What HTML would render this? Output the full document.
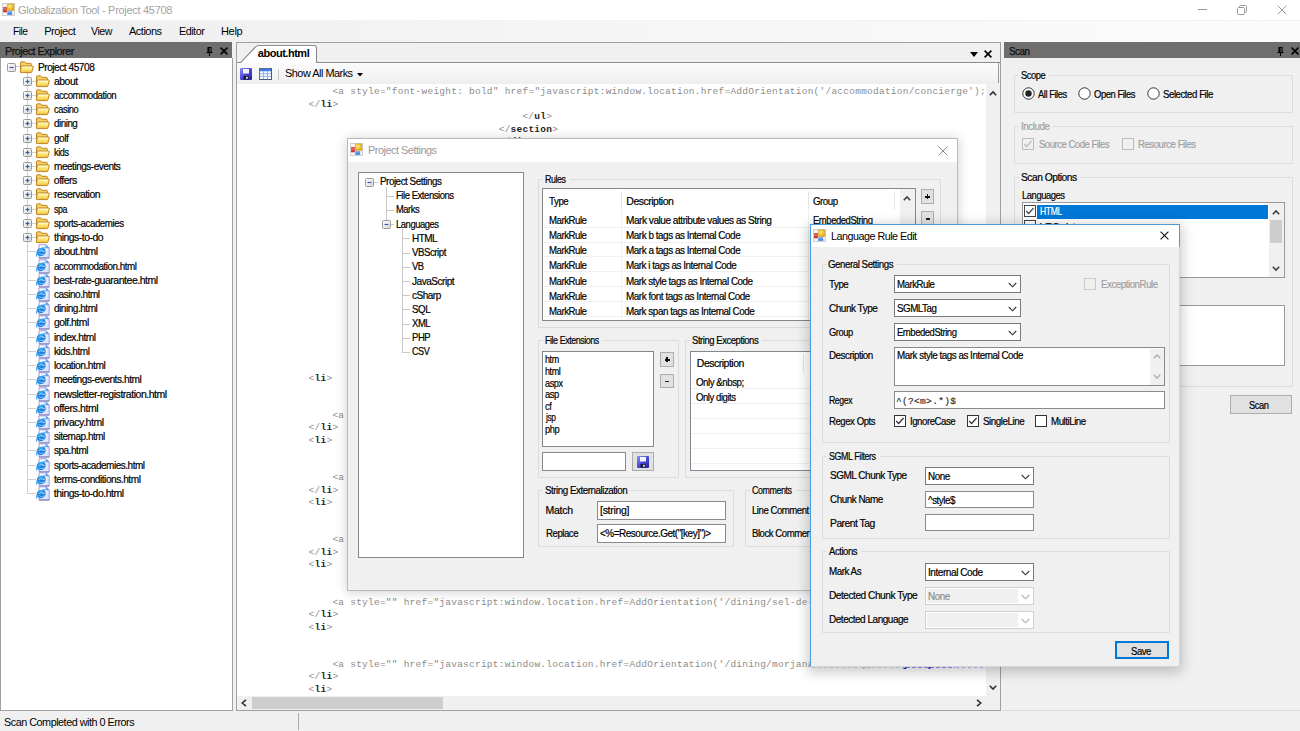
<!DOCTYPE html>
<html><head><meta charset="utf-8">
<style>
*{box-sizing:border-box;margin:0;padding:0}
html,body{width:1300px;height:731px;overflow:hidden;background:#f0f0f0;font-family:"Liberation Sans",sans-serif;font-size:11px;color:#000;position:relative}
.a{position:absolute}
.t{position:absolute;white-space:pre;line-height:20px}
.k{-webkit-text-stroke:0.2px currentColor}
.mono{position:absolute;font-family:"Liberation Mono",monospace;font-size:9.5px;line-height:20px;white-space:pre;color:#8c8c8c}
.mono b{color:#262626}
</style></head><body>
<div class="a" style="left:0px;top:0px;width:1300px;height:20px;background:#fff"></div>
<svg class="a" style="left:2px;top:3px;" width="13" height="13" viewBox="0 0 13 13"><defs><radialGradient id="ay" cx="0.4" cy="0.35" r="0.7"><stop offset="0" stop-color="#ffe98a"/><stop offset="1" stop-color="#e3a400"/></radialGradient><radialGradient id="ar" cx="0.5" cy="0.35" r="0.7"><stop offset="0" stop-color="#f27a7a"/><stop offset="1" stop-color="#b01414"/></radialGradient><linearGradient id="ab" x1="0" y1="0" x2="0" y2="1"><stop offset="0" stop-color="#8ec0ff"/><stop offset="1" stop-color="#2b6fdc"/></linearGradient></defs><rect x="0.5" y="0.5" width="12" height="12" fill="#f6f6f6" stroke="#cfcfcf"/><rect x="1.2" y="4" width="3.6" height="5.3" rx="0.5" fill="url(#ar)"/><rect x="5.2" y="0.9" width="6.6" height="6.6" rx="0.6" fill="url(#ay)" stroke="#c89410" stroke-width="0.5"/><rect x="5.2" y="7.9" width="5" height="3.8" rx="0.5" fill="url(#ab)"/></svg>
<div class="t" style="left:18.0px;top:0px;font-size:11px;letter-spacing:-0.30px;color:#a3a3a3;">Globalization Tool - Project 45708</div>
<div class="a" style="left:1198px;top:9px;width:9px;height:1px;background:#9a9a9a"></div>
<svg class="a" style="left:1237px;top:5px;" width="10" height="10" viewBox="0 0 10 10"><rect x="0.5" y="2.5" width="7" height="7" rx="1" fill="none" stroke="#9a9a9a"/><path d="M2.5 2.5 V1.5 Q2.5 0.5 3.5 0.5 H8.5 Q9.5 0.5 9.5 1.5 V6.5 Q9.5 7.5 8.5 7.5 H7.5" fill="none" stroke="#9a9a9a"/></svg>
<svg class="a" style="left:1277px;top:5px;" width="10" height="10" viewBox="0 0 10 10"><path d="M0.6 0.6 L9.4 9.4 M9.4 0.6 L0.6 9.4" stroke="#9a9a9a" stroke-width="1"/></svg>
<div class="a" style="left:0px;top:20px;width:1300px;height:22px;background:linear-gradient(to right,#eeeeee,#f6f6f6 50%,#fbfbfb)"></div>
<div class="a" style="left:0px;top:20px;width:1300px;height:1px;background:#f3f3f3"></div>
<div class="t" style="left:13.0px;top:21px;font-size:11px;letter-spacing:-0.50px;color:#000;transform:scaleX(0.927);transform-origin:0 0;">File</div>
<div class="t" style="left:44.2px;top:21px;font-size:11px;letter-spacing:-0.43px;color:#000;">Project</div>
<div class="t" style="left:91.3px;top:21px;font-size:11px;letter-spacing:-0.50px;color:#000;transform:scaleX(0.964);transform-origin:0 0;">View</div>
<div class="t" style="left:129.0px;top:21px;font-size:11px;letter-spacing:-0.50px;color:#000;">Actions</div>
<div class="t" style="left:179.0px;top:21px;font-size:11px;letter-spacing:-0.50px;color:#000;transform:scaleX(0.981);transform-origin:0 0;">Editor</div>
<div class="t" style="left:221.0px;top:21px;font-size:11px;letter-spacing:-0.33px;color:#000;">Help</div>
<div class="a" style="left:0px;top:42px;width:232px;height:16px;background:#6e6e6e"></div>
<div class="t" style="left:5.2px;top:41px;font-size:11px;letter-spacing:-0.50px;color:#101010;-webkit-text-stroke:0.25px #101010;transform:scaleX(0.979);transform-origin:0 0;">Project Explorer</div>
<svg class="a" style="left:206px;top:47px;" width="7" height="9" viewBox="0 0 7 9"><path d="M1.5 0.5 H5.5 M2 0.5 V5 M5 0.5 V5 M0.5 5.5 H6.5 M3.5 5.5 V9" stroke="#000" stroke-width="1.1" fill="none"/><rect x="2" y="1" width="1.5" height="4" fill="#000"/></svg>
<svg class="a" style="left:220px;top:47px;" width="8" height="8" viewBox="0 0 8 8"><path d="M0.6 0.6 L7.4 7.4 M7.4 0.6 L0.6 7.4" stroke="#000" stroke-width="1.6"/></svg>
<div class="a" style="left:0px;top:58px;width:233px;height:653px;background:#fff;border:1px solid #a0a0a0;border-top:0"></div>
<div class="a" style="left:27px;top:72px;width:1px;height:422px;background:#cfcfcf"></div>
<div class="a" style="left:16px;top:66px;width:4px;height:1px;background:#cfcfcf"></div>
<svg class="a" style="left:7px;top:63px;" width="9" height="9" viewBox="0 0 9 9"><defs><linearGradient id="eg" x1="0" y1="0" x2="1" y2="1"><stop offset="0" stop-color="#ffffff"/><stop offset="1" stop-color="#d8d8d8"/></linearGradient></defs><rect x="0.5" y="0.5" width="8" height="8" rx="1" fill="url(#eg)" stroke="#9a9a9a"/><path d="M2.5 4.5 H6.5" stroke="#3b5bb5" stroke-width="1.2"/></svg>
<svg class="a" style="left:19px;top:61px;" width="15" height="13" viewBox="0 0 15 13"><defs><linearGradient id="fd" x1="0" y1="0" x2="0" y2="1"><stop offset="0" stop-color="#fff7b8"/><stop offset="0.6" stop-color="#fbe068"/><stop offset="1" stop-color="#eeb83a"/></linearGradient></defs><path d="M1.5 10.5 V2 Q1.5 0.8 2.7 0.8 H5.3 Q5.9 0.8 6.3 1.4 L6.9 2.3 H11.4 Q12.4 2.3 12.4 3.3 V5.2" fill="#f5cf66" stroke="#bd8420" stroke-width="1"/><path d="M3 5 H13.6 Q14.5 5 14.3 5.8 L12.9 10.8 Q12.7 11.6 11.9 11.6 H2.1 Q1.2 11.6 1.3 10.8 L2.2 5.7 Q2.3 5 3 5Z" fill="url(#fd)" stroke="#bd8420" stroke-width="1"/><path d="M3.2 6.2 H13" stroke="#fffbe0" stroke-width="0.8"/></svg>
<div class="t k" style="left:37.6px;top:57px;font-size:10.5px;letter-spacing:-0.50px;transform:scaleX(0.966);transform-origin:0 0;">Project 45708</div>
<div class="a" style="left:32px;top:81px;width:4px;height:1px;background:#cfcfcf"></div>
<svg class="a" style="left:23px;top:77px;" width="9" height="9" viewBox="0 0 9 9"><defs><linearGradient id="eg" x1="0" y1="0" x2="1" y2="1"><stop offset="0" stop-color="#ffffff"/><stop offset="1" stop-color="#d8d8d8"/></linearGradient></defs><rect x="0.5" y="0.5" width="8" height="8" rx="1" fill="url(#eg)" stroke="#9a9a9a"/><path d="M2.5 4.5 H6.5" stroke="#3b5bb5" stroke-width="1.2"/><path d="M4.5 2.5 V6.5" stroke="#3b5bb5" stroke-width="1.2"/></svg>
<svg class="a" style="left:35px;top:75px;" width="15" height="13" viewBox="0 0 15 13"><defs><linearGradient id="fd" x1="0" y1="0" x2="0" y2="1"><stop offset="0" stop-color="#fff7b8"/><stop offset="0.6" stop-color="#fbe068"/><stop offset="1" stop-color="#eeb83a"/></linearGradient></defs><path d="M1.5 10.5 V2 Q1.5 0.8 2.7 0.8 H5.3 Q5.9 0.8 6.3 1.4 L6.9 2.3 H11.4 Q12.4 2.3 12.4 3.3 V5.2" fill="#f5cf66" stroke="#bd8420" stroke-width="1"/><path d="M3 5 H13.6 Q14.5 5 14.3 5.8 L12.9 10.8 Q12.7 11.6 11.9 11.6 H2.1 Q1.2 11.6 1.3 10.8 L2.2 5.7 Q2.3 5 3 5Z" fill="url(#fd)" stroke="#bd8420" stroke-width="1"/><path d="M3.2 6.2 H13" stroke="#fffbe0" stroke-width="0.8"/></svg>
<div class="t k" style="left:53.8px;top:71px;font-size:10.5px;letter-spacing:-0.50px;transform:scaleX(0.992);transform-origin:0 0;">about</div>
<div class="a" style="left:32px;top:95px;width:4px;height:1px;background:#cfcfcf"></div>
<svg class="a" style="left:23px;top:91px;" width="9" height="9" viewBox="0 0 9 9"><defs><linearGradient id="eg" x1="0" y1="0" x2="1" y2="1"><stop offset="0" stop-color="#ffffff"/><stop offset="1" stop-color="#d8d8d8"/></linearGradient></defs><rect x="0.5" y="0.5" width="8" height="8" rx="1" fill="url(#eg)" stroke="#9a9a9a"/><path d="M2.5 4.5 H6.5" stroke="#3b5bb5" stroke-width="1.2"/><path d="M4.5 2.5 V6.5" stroke="#3b5bb5" stroke-width="1.2"/></svg>
<svg class="a" style="left:35px;top:89px;" width="15" height="13" viewBox="0 0 15 13"><defs><linearGradient id="fd" x1="0" y1="0" x2="0" y2="1"><stop offset="0" stop-color="#fff7b8"/><stop offset="0.6" stop-color="#fbe068"/><stop offset="1" stop-color="#eeb83a"/></linearGradient></defs><path d="M1.5 10.5 V2 Q1.5 0.8 2.7 0.8 H5.3 Q5.9 0.8 6.3 1.4 L6.9 2.3 H11.4 Q12.4 2.3 12.4 3.3 V5.2" fill="#f5cf66" stroke="#bd8420" stroke-width="1"/><path d="M3 5 H13.6 Q14.5 5 14.3 5.8 L12.9 10.8 Q12.7 11.6 11.9 11.6 H2.1 Q1.2 11.6 1.3 10.8 L2.2 5.7 Q2.3 5 3 5Z" fill="url(#fd)" stroke="#bd8420" stroke-width="1"/><path d="M3.2 6.2 H13" stroke="#fffbe0" stroke-width="0.8"/></svg>
<div class="t k" style="left:53.8px;top:85px;font-size:10.5px;letter-spacing:-0.50px;transform:scaleX(0.921);transform-origin:0 0;">accommodation</div>
<div class="a" style="left:32px;top:109px;width:4px;height:1px;background:#cfcfcf"></div>
<svg class="a" style="left:23px;top:105px;" width="9" height="9" viewBox="0 0 9 9"><defs><linearGradient id="eg" x1="0" y1="0" x2="1" y2="1"><stop offset="0" stop-color="#ffffff"/><stop offset="1" stop-color="#d8d8d8"/></linearGradient></defs><rect x="0.5" y="0.5" width="8" height="8" rx="1" fill="url(#eg)" stroke="#9a9a9a"/><path d="M2.5 4.5 H6.5" stroke="#3b5bb5" stroke-width="1.2"/><path d="M4.5 2.5 V6.5" stroke="#3b5bb5" stroke-width="1.2"/></svg>
<svg class="a" style="left:35px;top:103px;" width="15" height="13" viewBox="0 0 15 13"><defs><linearGradient id="fd" x1="0" y1="0" x2="0" y2="1"><stop offset="0" stop-color="#fff7b8"/><stop offset="0.6" stop-color="#fbe068"/><stop offset="1" stop-color="#eeb83a"/></linearGradient></defs><path d="M1.5 10.5 V2 Q1.5 0.8 2.7 0.8 H5.3 Q5.9 0.8 6.3 1.4 L6.9 2.3 H11.4 Q12.4 2.3 12.4 3.3 V5.2" fill="#f5cf66" stroke="#bd8420" stroke-width="1"/><path d="M3 5 H13.6 Q14.5 5 14.3 5.8 L12.9 10.8 Q12.7 11.6 11.9 11.6 H2.1 Q1.2 11.6 1.3 10.8 L2.2 5.7 Q2.3 5 3 5Z" fill="url(#fd)" stroke="#bd8420" stroke-width="1"/><path d="M3.2 6.2 H13" stroke="#fffbe0" stroke-width="0.8"/></svg>
<div class="t k" style="left:53.8px;top:99px;font-size:10.5px;letter-spacing:-0.50px;transform:scaleX(0.888);transform-origin:0 0;">casino</div>
<div class="a" style="left:32px;top:123px;width:4px;height:1px;background:#cfcfcf"></div>
<svg class="a" style="left:23px;top:119px;" width="9" height="9" viewBox="0 0 9 9"><defs><linearGradient id="eg" x1="0" y1="0" x2="1" y2="1"><stop offset="0" stop-color="#ffffff"/><stop offset="1" stop-color="#d8d8d8"/></linearGradient></defs><rect x="0.5" y="0.5" width="8" height="8" rx="1" fill="url(#eg)" stroke="#9a9a9a"/><path d="M2.5 4.5 H6.5" stroke="#3b5bb5" stroke-width="1.2"/><path d="M4.5 2.5 V6.5" stroke="#3b5bb5" stroke-width="1.2"/></svg>
<svg class="a" style="left:35px;top:117px;" width="15" height="13" viewBox="0 0 15 13"><defs><linearGradient id="fd" x1="0" y1="0" x2="0" y2="1"><stop offset="0" stop-color="#fff7b8"/><stop offset="0.6" stop-color="#fbe068"/><stop offset="1" stop-color="#eeb83a"/></linearGradient></defs><path d="M1.5 10.5 V2 Q1.5 0.8 2.7 0.8 H5.3 Q5.9 0.8 6.3 1.4 L6.9 2.3 H11.4 Q12.4 2.3 12.4 3.3 V5.2" fill="#f5cf66" stroke="#bd8420" stroke-width="1"/><path d="M3 5 H13.6 Q14.5 5 14.3 5.8 L12.9 10.8 Q12.7 11.6 11.9 11.6 H2.1 Q1.2 11.6 1.3 10.8 L2.2 5.7 Q2.3 5 3 5Z" fill="url(#fd)" stroke="#bd8420" stroke-width="1"/><path d="M3.2 6.2 H13" stroke="#fffbe0" stroke-width="0.8"/></svg>
<div class="t k" style="left:53.8px;top:113px;font-size:10.5px;letter-spacing:-0.50px;transform:scaleX(0.933);transform-origin:0 0;">dining</div>
<div class="a" style="left:32px;top:138px;width:4px;height:1px;background:#cfcfcf"></div>
<svg class="a" style="left:23px;top:134px;" width="9" height="9" viewBox="0 0 9 9"><defs><linearGradient id="eg" x1="0" y1="0" x2="1" y2="1"><stop offset="0" stop-color="#ffffff"/><stop offset="1" stop-color="#d8d8d8"/></linearGradient></defs><rect x="0.5" y="0.5" width="8" height="8" rx="1" fill="url(#eg)" stroke="#9a9a9a"/><path d="M2.5 4.5 H6.5" stroke="#3b5bb5" stroke-width="1.2"/><path d="M4.5 2.5 V6.5" stroke="#3b5bb5" stroke-width="1.2"/></svg>
<svg class="a" style="left:35px;top:132px;" width="15" height="13" viewBox="0 0 15 13"><defs><linearGradient id="fd" x1="0" y1="0" x2="0" y2="1"><stop offset="0" stop-color="#fff7b8"/><stop offset="0.6" stop-color="#fbe068"/><stop offset="1" stop-color="#eeb83a"/></linearGradient></defs><path d="M1.5 10.5 V2 Q1.5 0.8 2.7 0.8 H5.3 Q5.9 0.8 6.3 1.4 L6.9 2.3 H11.4 Q12.4 2.3 12.4 3.3 V5.2" fill="#f5cf66" stroke="#bd8420" stroke-width="1"/><path d="M3 5 H13.6 Q14.5 5 14.3 5.8 L12.9 10.8 Q12.7 11.6 11.9 11.6 H2.1 Q1.2 11.6 1.3 10.8 L2.2 5.7 Q2.3 5 3 5Z" fill="url(#fd)" stroke="#bd8420" stroke-width="1"/><path d="M3.2 6.2 H13" stroke="#fffbe0" stroke-width="0.8"/></svg>
<div class="t k" style="left:53.8px;top:128px;font-size:10.5px;letter-spacing:-0.50px;transform:scaleX(0.958);transform-origin:0 0;">golf</div>
<div class="a" style="left:32px;top:152px;width:4px;height:1px;background:#cfcfcf"></div>
<svg class="a" style="left:23px;top:148px;" width="9" height="9" viewBox="0 0 9 9"><defs><linearGradient id="eg" x1="0" y1="0" x2="1" y2="1"><stop offset="0" stop-color="#ffffff"/><stop offset="1" stop-color="#d8d8d8"/></linearGradient></defs><rect x="0.5" y="0.5" width="8" height="8" rx="1" fill="url(#eg)" stroke="#9a9a9a"/><path d="M2.5 4.5 H6.5" stroke="#3b5bb5" stroke-width="1.2"/><path d="M4.5 2.5 V6.5" stroke="#3b5bb5" stroke-width="1.2"/></svg>
<svg class="a" style="left:35px;top:146px;" width="15" height="13" viewBox="0 0 15 13"><defs><linearGradient id="fd" x1="0" y1="0" x2="0" y2="1"><stop offset="0" stop-color="#fff7b8"/><stop offset="0.6" stop-color="#fbe068"/><stop offset="1" stop-color="#eeb83a"/></linearGradient></defs><path d="M1.5 10.5 V2 Q1.5 0.8 2.7 0.8 H5.3 Q5.9 0.8 6.3 1.4 L6.9 2.3 H11.4 Q12.4 2.3 12.4 3.3 V5.2" fill="#f5cf66" stroke="#bd8420" stroke-width="1"/><path d="M3 5 H13.6 Q14.5 5 14.3 5.8 L12.9 10.8 Q12.7 11.6 11.9 11.6 H2.1 Q1.2 11.6 1.3 10.8 L2.2 5.7 Q2.3 5 3 5Z" fill="url(#fd)" stroke="#bd8420" stroke-width="1"/><path d="M3.2 6.2 H13" stroke="#fffbe0" stroke-width="0.8"/></svg>
<div class="t k" style="left:53.8px;top:142px;font-size:10.5px;letter-spacing:-0.50px;transform:scaleX(0.874);transform-origin:0 0;">kids</div>
<div class="a" style="left:32px;top:166px;width:4px;height:1px;background:#cfcfcf"></div>
<svg class="a" style="left:23px;top:162px;" width="9" height="9" viewBox="0 0 9 9"><defs><linearGradient id="eg" x1="0" y1="0" x2="1" y2="1"><stop offset="0" stop-color="#ffffff"/><stop offset="1" stop-color="#d8d8d8"/></linearGradient></defs><rect x="0.5" y="0.5" width="8" height="8" rx="1" fill="url(#eg)" stroke="#9a9a9a"/><path d="M2.5 4.5 H6.5" stroke="#3b5bb5" stroke-width="1.2"/><path d="M4.5 2.5 V6.5" stroke="#3b5bb5" stroke-width="1.2"/></svg>
<svg class="a" style="left:35px;top:160px;" width="15" height="13" viewBox="0 0 15 13"><defs><linearGradient id="fd" x1="0" y1="0" x2="0" y2="1"><stop offset="0" stop-color="#fff7b8"/><stop offset="0.6" stop-color="#fbe068"/><stop offset="1" stop-color="#eeb83a"/></linearGradient></defs><path d="M1.5 10.5 V2 Q1.5 0.8 2.7 0.8 H5.3 Q5.9 0.8 6.3 1.4 L6.9 2.3 H11.4 Q12.4 2.3 12.4 3.3 V5.2" fill="#f5cf66" stroke="#bd8420" stroke-width="1"/><path d="M3 5 H13.6 Q14.5 5 14.3 5.8 L12.9 10.8 Q12.7 11.6 11.9 11.6 H2.1 Q1.2 11.6 1.3 10.8 L2.2 5.7 Q2.3 5 3 5Z" fill="url(#fd)" stroke="#bd8420" stroke-width="1"/><path d="M3.2 6.2 H13" stroke="#fffbe0" stroke-width="0.8"/></svg>
<div class="t k" style="left:53.8px;top:156px;font-size:10.5px;letter-spacing:-0.50px;transform:scaleX(0.955);transform-origin:0 0;">meetings-events</div>
<div class="a" style="left:32px;top:180px;width:4px;height:1px;background:#cfcfcf"></div>
<svg class="a" style="left:23px;top:176px;" width="9" height="9" viewBox="0 0 9 9"><defs><linearGradient id="eg" x1="0" y1="0" x2="1" y2="1"><stop offset="0" stop-color="#ffffff"/><stop offset="1" stop-color="#d8d8d8"/></linearGradient></defs><rect x="0.5" y="0.5" width="8" height="8" rx="1" fill="url(#eg)" stroke="#9a9a9a"/><path d="M2.5 4.5 H6.5" stroke="#3b5bb5" stroke-width="1.2"/><path d="M4.5 2.5 V6.5" stroke="#3b5bb5" stroke-width="1.2"/></svg>
<svg class="a" style="left:35px;top:174px;" width="15" height="13" viewBox="0 0 15 13"><defs><linearGradient id="fd" x1="0" y1="0" x2="0" y2="1"><stop offset="0" stop-color="#fff7b8"/><stop offset="0.6" stop-color="#fbe068"/><stop offset="1" stop-color="#eeb83a"/></linearGradient></defs><path d="M1.5 10.5 V2 Q1.5 0.8 2.7 0.8 H5.3 Q5.9 0.8 6.3 1.4 L6.9 2.3 H11.4 Q12.4 2.3 12.4 3.3 V5.2" fill="#f5cf66" stroke="#bd8420" stroke-width="1"/><path d="M3 5 H13.6 Q14.5 5 14.3 5.8 L12.9 10.8 Q12.7 11.6 11.9 11.6 H2.1 Q1.2 11.6 1.3 10.8 L2.2 5.7 Q2.3 5 3 5Z" fill="url(#fd)" stroke="#bd8420" stroke-width="1"/><path d="M3.2 6.2 H13" stroke="#fffbe0" stroke-width="0.8"/></svg>
<div class="t k" style="left:53.8px;top:170px;font-size:10.5px;letter-spacing:-0.50px;">offers</div>
<div class="a" style="left:32px;top:194px;width:4px;height:1px;background:#cfcfcf"></div>
<svg class="a" style="left:23px;top:190px;" width="9" height="9" viewBox="0 0 9 9"><defs><linearGradient id="eg" x1="0" y1="0" x2="1" y2="1"><stop offset="0" stop-color="#ffffff"/><stop offset="1" stop-color="#d8d8d8"/></linearGradient></defs><rect x="0.5" y="0.5" width="8" height="8" rx="1" fill="url(#eg)" stroke="#9a9a9a"/><path d="M2.5 4.5 H6.5" stroke="#3b5bb5" stroke-width="1.2"/><path d="M4.5 2.5 V6.5" stroke="#3b5bb5" stroke-width="1.2"/></svg>
<svg class="a" style="left:35px;top:188px;" width="15" height="13" viewBox="0 0 15 13"><defs><linearGradient id="fd" x1="0" y1="0" x2="0" y2="1"><stop offset="0" stop-color="#fff7b8"/><stop offset="0.6" stop-color="#fbe068"/><stop offset="1" stop-color="#eeb83a"/></linearGradient></defs><path d="M1.5 10.5 V2 Q1.5 0.8 2.7 0.8 H5.3 Q5.9 0.8 6.3 1.4 L6.9 2.3 H11.4 Q12.4 2.3 12.4 3.3 V5.2" fill="#f5cf66" stroke="#bd8420" stroke-width="1"/><path d="M3 5 H13.6 Q14.5 5 14.3 5.8 L12.9 10.8 Q12.7 11.6 11.9 11.6 H2.1 Q1.2 11.6 1.3 10.8 L2.2 5.7 Q2.3 5 3 5Z" fill="url(#fd)" stroke="#bd8420" stroke-width="1"/><path d="M3.2 6.2 H13" stroke="#fffbe0" stroke-width="0.8"/></svg>
<div class="t k" style="left:53.8px;top:184px;font-size:10.5px;letter-spacing:-0.50px;transform:scaleX(0.991);transform-origin:0 0;">reservation</div>
<div class="a" style="left:32px;top:209px;width:4px;height:1px;background:#cfcfcf"></div>
<svg class="a" style="left:23px;top:205px;" width="9" height="9" viewBox="0 0 9 9"><defs><linearGradient id="eg" x1="0" y1="0" x2="1" y2="1"><stop offset="0" stop-color="#ffffff"/><stop offset="1" stop-color="#d8d8d8"/></linearGradient></defs><rect x="0.5" y="0.5" width="8" height="8" rx="1" fill="url(#eg)" stroke="#9a9a9a"/><path d="M2.5 4.5 H6.5" stroke="#3b5bb5" stroke-width="1.2"/><path d="M4.5 2.5 V6.5" stroke="#3b5bb5" stroke-width="1.2"/></svg>
<svg class="a" style="left:35px;top:203px;" width="15" height="13" viewBox="0 0 15 13"><defs><linearGradient id="fd" x1="0" y1="0" x2="0" y2="1"><stop offset="0" stop-color="#fff7b8"/><stop offset="0.6" stop-color="#fbe068"/><stop offset="1" stop-color="#eeb83a"/></linearGradient></defs><path d="M1.5 10.5 V2 Q1.5 0.8 2.7 0.8 H5.3 Q5.9 0.8 6.3 1.4 L6.9 2.3 H11.4 Q12.4 2.3 12.4 3.3 V5.2" fill="#f5cf66" stroke="#bd8420" stroke-width="1"/><path d="M3 5 H13.6 Q14.5 5 14.3 5.8 L12.9 10.8 Q12.7 11.6 11.9 11.6 H2.1 Q1.2 11.6 1.3 10.8 L2.2 5.7 Q2.3 5 3 5Z" fill="url(#fd)" stroke="#bd8420" stroke-width="1"/><path d="M3.2 6.2 H13" stroke="#fffbe0" stroke-width="0.8"/></svg>
<div class="t k" style="left:53.8px;top:199px;font-size:10.5px;letter-spacing:-0.50px;transform:scaleX(0.841);transform-origin:0 0;">spa</div>
<div class="a" style="left:32px;top:223px;width:4px;height:1px;background:#cfcfcf"></div>
<svg class="a" style="left:23px;top:219px;" width="9" height="9" viewBox="0 0 9 9"><defs><linearGradient id="eg" x1="0" y1="0" x2="1" y2="1"><stop offset="0" stop-color="#ffffff"/><stop offset="1" stop-color="#d8d8d8"/></linearGradient></defs><rect x="0.5" y="0.5" width="8" height="8" rx="1" fill="url(#eg)" stroke="#9a9a9a"/><path d="M2.5 4.5 H6.5" stroke="#3b5bb5" stroke-width="1.2"/><path d="M4.5 2.5 V6.5" stroke="#3b5bb5" stroke-width="1.2"/></svg>
<svg class="a" style="left:35px;top:217px;" width="15" height="13" viewBox="0 0 15 13"><defs><linearGradient id="fd" x1="0" y1="0" x2="0" y2="1"><stop offset="0" stop-color="#fff7b8"/><stop offset="0.6" stop-color="#fbe068"/><stop offset="1" stop-color="#eeb83a"/></linearGradient></defs><path d="M1.5 10.5 V2 Q1.5 0.8 2.7 0.8 H5.3 Q5.9 0.8 6.3 1.4 L6.9 2.3 H11.4 Q12.4 2.3 12.4 3.3 V5.2" fill="#f5cf66" stroke="#bd8420" stroke-width="1"/><path d="M3 5 H13.6 Q14.5 5 14.3 5.8 L12.9 10.8 Q12.7 11.6 11.9 11.6 H2.1 Q1.2 11.6 1.3 10.8 L2.2 5.7 Q2.3 5 3 5Z" fill="url(#fd)" stroke="#bd8420" stroke-width="1"/><path d="M3.2 6.2 H13" stroke="#fffbe0" stroke-width="0.8"/></svg>
<div class="t k" style="left:53.8px;top:213px;font-size:10.5px;letter-spacing:-0.50px;transform:scaleX(0.929);transform-origin:0 0;">sports-academies</div>
<div class="a" style="left:32px;top:237px;width:4px;height:1px;background:#cfcfcf"></div>
<svg class="a" style="left:23px;top:233px;" width="9" height="9" viewBox="0 0 9 9"><defs><linearGradient id="eg" x1="0" y1="0" x2="1" y2="1"><stop offset="0" stop-color="#ffffff"/><stop offset="1" stop-color="#d8d8d8"/></linearGradient></defs><rect x="0.5" y="0.5" width="8" height="8" rx="1" fill="url(#eg)" stroke="#9a9a9a"/><path d="M2.5 4.5 H6.5" stroke="#3b5bb5" stroke-width="1.2"/><path d="M4.5 2.5 V6.5" stroke="#3b5bb5" stroke-width="1.2"/></svg>
<svg class="a" style="left:35px;top:231px;" width="15" height="13" viewBox="0 0 15 13"><defs><linearGradient id="fd" x1="0" y1="0" x2="0" y2="1"><stop offset="0" stop-color="#fff7b8"/><stop offset="0.6" stop-color="#fbe068"/><stop offset="1" stop-color="#eeb83a"/></linearGradient></defs><path d="M1.5 10.5 V2 Q1.5 0.8 2.7 0.8 H5.3 Q5.9 0.8 6.3 1.4 L6.9 2.3 H11.4 Q12.4 2.3 12.4 3.3 V5.2" fill="#f5cf66" stroke="#bd8420" stroke-width="1"/><path d="M3 5 H13.6 Q14.5 5 14.3 5.8 L12.9 10.8 Q12.7 11.6 11.9 11.6 H2.1 Q1.2 11.6 1.3 10.8 L2.2 5.7 Q2.3 5 3 5Z" fill="url(#fd)" stroke="#bd8420" stroke-width="1"/><path d="M3.2 6.2 H13" stroke="#fffbe0" stroke-width="0.8"/></svg>
<div class="t k" style="left:53.8px;top:227px;font-size:10.5px;letter-spacing:-0.50px;transform:scaleX(0.990);transform-origin:0 0;">things-to-do</div>
<div class="a" style="left:28px;top:251px;width:8px;height:1px;background:#cfcfcf"></div>
<svg class="a" style="left:35px;top:244px;" width="15" height="15" viewBox="0 0 15 15"><defs><linearGradient id="pg" x1="0" y1="0" x2="1" y2="1"><stop offset="0" stop-color="#ffffff"/><stop offset="1" stop-color="#d4dcfa"/></linearGradient></defs><path d="M4 0.8 H11 L14.2 4 V14 H4Z" fill="url(#pg)" stroke="#9d9dd8" stroke-width="1"/><path d="M4 14 H14.2" stroke="#7c7cb4" stroke-width="1"/><path d="M11 0.8 V4 H14.2Z" fill="#5aa0e8" stroke="#8a9ad8" stroke-width="0.6"/><ellipse cx="6.2" cy="7.9" rx="4.6" ry="4.1" transform="rotate(-28 6.2 7.9)" fill="#1f7edc"/><path d="M3.2 7.4 Q6 6 9.8 7.6" stroke="#bfe8ff" stroke-width="1.1" fill="none"/><path d="M3.8 9.6 Q6.5 11.6 9.6 9.8" stroke="#7cc8f8" stroke-width="1" fill="none"/><ellipse cx="5.6" cy="5.4" rx="2" ry="1.1" fill="#5ec0f8" opacity="0.9"/><path d="M1.6 12.4 Q1.4 5 10.4 3.6" stroke="#2ea4ec" stroke-width="1.2" fill="none"/></svg>
<div class="t k" style="left:53.8px;top:241px;font-size:10.5px;letter-spacing:-0.50px;transform:scaleX(0.989);transform-origin:0 0;">about.html</div>
<div class="a" style="left:28px;top:266px;width:8px;height:1px;background:#cfcfcf"></div>
<svg class="a" style="left:35px;top:259px;" width="15" height="15" viewBox="0 0 15 15"><defs><linearGradient id="pg" x1="0" y1="0" x2="1" y2="1"><stop offset="0" stop-color="#ffffff"/><stop offset="1" stop-color="#d4dcfa"/></linearGradient></defs><path d="M4 0.8 H11 L14.2 4 V14 H4Z" fill="url(#pg)" stroke="#9d9dd8" stroke-width="1"/><path d="M4 14 H14.2" stroke="#7c7cb4" stroke-width="1"/><path d="M11 0.8 V4 H14.2Z" fill="#5aa0e8" stroke="#8a9ad8" stroke-width="0.6"/><ellipse cx="6.2" cy="7.9" rx="4.6" ry="4.1" transform="rotate(-28 6.2 7.9)" fill="#1f7edc"/><path d="M3.2 7.4 Q6 6 9.8 7.6" stroke="#bfe8ff" stroke-width="1.1" fill="none"/><path d="M3.8 9.6 Q6.5 11.6 9.6 9.8" stroke="#7cc8f8" stroke-width="1" fill="none"/><ellipse cx="5.6" cy="5.4" rx="2" ry="1.1" fill="#5ec0f8" opacity="0.9"/><path d="M1.6 12.4 Q1.4 5 10.4 3.6" stroke="#2ea4ec" stroke-width="1.2" fill="none"/></svg>
<div class="t k" style="left:53.8px;top:256px;font-size:10.5px;letter-spacing:-0.50px;transform:scaleX(0.938);transform-origin:0 0;">accommodation.html</div>
<div class="a" style="left:28px;top:280px;width:8px;height:1px;background:#cfcfcf"></div>
<svg class="a" style="left:35px;top:273px;" width="15" height="15" viewBox="0 0 15 15"><defs><linearGradient id="pg" x1="0" y1="0" x2="1" y2="1"><stop offset="0" stop-color="#ffffff"/><stop offset="1" stop-color="#d4dcfa"/></linearGradient></defs><path d="M4 0.8 H11 L14.2 4 V14 H4Z" fill="url(#pg)" stroke="#9d9dd8" stroke-width="1"/><path d="M4 14 H14.2" stroke="#7c7cb4" stroke-width="1"/><path d="M11 0.8 V4 H14.2Z" fill="#5aa0e8" stroke="#8a9ad8" stroke-width="0.6"/><ellipse cx="6.2" cy="7.9" rx="4.6" ry="4.1" transform="rotate(-28 6.2 7.9)" fill="#1f7edc"/><path d="M3.2 7.4 Q6 6 9.8 7.6" stroke="#bfe8ff" stroke-width="1.1" fill="none"/><path d="M3.8 9.6 Q6.5 11.6 9.6 9.8" stroke="#7cc8f8" stroke-width="1" fill="none"/><ellipse cx="5.6" cy="5.4" rx="2" ry="1.1" fill="#5ec0f8" opacity="0.9"/><path d="M1.6 12.4 Q1.4 5 10.4 3.6" stroke="#2ea4ec" stroke-width="1.2" fill="none"/></svg>
<div class="t k" style="left:53.8px;top:270px;font-size:10.5px;letter-spacing:-0.46px;">best-rate-guarantee.html</div>
<div class="a" style="left:28px;top:294px;width:8px;height:1px;background:#cfcfcf"></div>
<svg class="a" style="left:35px;top:287px;" width="15" height="15" viewBox="0 0 15 15"><defs><linearGradient id="pg" x1="0" y1="0" x2="1" y2="1"><stop offset="0" stop-color="#ffffff"/><stop offset="1" stop-color="#d4dcfa"/></linearGradient></defs><path d="M4 0.8 H11 L14.2 4 V14 H4Z" fill="url(#pg)" stroke="#9d9dd8" stroke-width="1"/><path d="M4 14 H14.2" stroke="#7c7cb4" stroke-width="1"/><path d="M11 0.8 V4 H14.2Z" fill="#5aa0e8" stroke="#8a9ad8" stroke-width="0.6"/><ellipse cx="6.2" cy="7.9" rx="4.6" ry="4.1" transform="rotate(-28 6.2 7.9)" fill="#1f7edc"/><path d="M3.2 7.4 Q6 6 9.8 7.6" stroke="#bfe8ff" stroke-width="1.1" fill="none"/><path d="M3.8 9.6 Q6.5 11.6 9.6 9.8" stroke="#7cc8f8" stroke-width="1" fill="none"/><ellipse cx="5.6" cy="5.4" rx="2" ry="1.1" fill="#5ec0f8" opacity="0.9"/><path d="M1.6 12.4 Q1.4 5 10.4 3.6" stroke="#2ea4ec" stroke-width="1.2" fill="none"/></svg>
<div class="t k" style="left:53.8px;top:284px;font-size:10.5px;letter-spacing:-0.50px;transform:scaleX(0.958);transform-origin:0 0;">casino.html</div>
<div class="a" style="left:28px;top:308px;width:8px;height:1px;background:#cfcfcf"></div>
<svg class="a" style="left:35px;top:301px;" width="15" height="15" viewBox="0 0 15 15"><defs><linearGradient id="pg" x1="0" y1="0" x2="1" y2="1"><stop offset="0" stop-color="#ffffff"/><stop offset="1" stop-color="#d4dcfa"/></linearGradient></defs><path d="M4 0.8 H11 L14.2 4 V14 H4Z" fill="url(#pg)" stroke="#9d9dd8" stroke-width="1"/><path d="M4 14 H14.2" stroke="#7c7cb4" stroke-width="1"/><path d="M11 0.8 V4 H14.2Z" fill="#5aa0e8" stroke="#8a9ad8" stroke-width="0.6"/><ellipse cx="6.2" cy="7.9" rx="4.6" ry="4.1" transform="rotate(-28 6.2 7.9)" fill="#1f7edc"/><path d="M3.2 7.4 Q6 6 9.8 7.6" stroke="#bfe8ff" stroke-width="1.1" fill="none"/><path d="M3.8 9.6 Q6.5 11.6 9.6 9.8" stroke="#7cc8f8" stroke-width="1" fill="none"/><ellipse cx="5.6" cy="5.4" rx="2" ry="1.1" fill="#5ec0f8" opacity="0.9"/><path d="M1.6 12.4 Q1.4 5 10.4 3.6" stroke="#2ea4ec" stroke-width="1.2" fill="none"/></svg>
<div class="t k" style="left:53.8px;top:298px;font-size:10.5px;letter-spacing:-0.50px;transform:scaleX(0.957);transform-origin:0 0;">dining.html</div>
<div class="a" style="left:28px;top:322px;width:8px;height:1px;background:#cfcfcf"></div>
<svg class="a" style="left:35px;top:315px;" width="15" height="15" viewBox="0 0 15 15"><defs><linearGradient id="pg" x1="0" y1="0" x2="1" y2="1"><stop offset="0" stop-color="#ffffff"/><stop offset="1" stop-color="#d4dcfa"/></linearGradient></defs><path d="M4 0.8 H11 L14.2 4 V14 H4Z" fill="url(#pg)" stroke="#9d9dd8" stroke-width="1"/><path d="M4 14 H14.2" stroke="#7c7cb4" stroke-width="1"/><path d="M11 0.8 V4 H14.2Z" fill="#5aa0e8" stroke="#8a9ad8" stroke-width="0.6"/><ellipse cx="6.2" cy="7.9" rx="4.6" ry="4.1" transform="rotate(-28 6.2 7.9)" fill="#1f7edc"/><path d="M3.2 7.4 Q6 6 9.8 7.6" stroke="#bfe8ff" stroke-width="1.1" fill="none"/><path d="M3.8 9.6 Q6.5 11.6 9.6 9.8" stroke="#7cc8f8" stroke-width="1" fill="none"/><ellipse cx="5.6" cy="5.4" rx="2" ry="1.1" fill="#5ec0f8" opacity="0.9"/><path d="M1.6 12.4 Q1.4 5 10.4 3.6" stroke="#2ea4ec" stroke-width="1.2" fill="none"/></svg>
<div class="t k" style="left:53.8px;top:312px;font-size:10.5px;letter-spacing:-0.50px;transform:scaleX(0.986);transform-origin:0 0;">golf.html</div>
<div class="a" style="left:28px;top:337px;width:8px;height:1px;background:#cfcfcf"></div>
<svg class="a" style="left:35px;top:330px;" width="15" height="15" viewBox="0 0 15 15"><defs><linearGradient id="pg" x1="0" y1="0" x2="1" y2="1"><stop offset="0" stop-color="#ffffff"/><stop offset="1" stop-color="#d4dcfa"/></linearGradient></defs><path d="M4 0.8 H11 L14.2 4 V14 H4Z" fill="url(#pg)" stroke="#9d9dd8" stroke-width="1"/><path d="M4 14 H14.2" stroke="#7c7cb4" stroke-width="1"/><path d="M11 0.8 V4 H14.2Z" fill="#5aa0e8" stroke="#8a9ad8" stroke-width="0.6"/><ellipse cx="6.2" cy="7.9" rx="4.6" ry="4.1" transform="rotate(-28 6.2 7.9)" fill="#1f7edc"/><path d="M3.2 7.4 Q6 6 9.8 7.6" stroke="#bfe8ff" stroke-width="1.1" fill="none"/><path d="M3.8 9.6 Q6.5 11.6 9.6 9.8" stroke="#7cc8f8" stroke-width="1" fill="none"/><ellipse cx="5.6" cy="5.4" rx="2" ry="1.1" fill="#5ec0f8" opacity="0.9"/><path d="M1.6 12.4 Q1.4 5 10.4 3.6" stroke="#2ea4ec" stroke-width="1.2" fill="none"/></svg>
<div class="t k" style="left:53.8px;top:327px;font-size:10.5px;letter-spacing:-0.50px;transform:scaleX(0.972);transform-origin:0 0;">index.html</div>
<div class="a" style="left:28px;top:351px;width:8px;height:1px;background:#cfcfcf"></div>
<svg class="a" style="left:35px;top:344px;" width="15" height="15" viewBox="0 0 15 15"><defs><linearGradient id="pg" x1="0" y1="0" x2="1" y2="1"><stop offset="0" stop-color="#ffffff"/><stop offset="1" stop-color="#d4dcfa"/></linearGradient></defs><path d="M4 0.8 H11 L14.2 4 V14 H4Z" fill="url(#pg)" stroke="#9d9dd8" stroke-width="1"/><path d="M4 14 H14.2" stroke="#7c7cb4" stroke-width="1"/><path d="M11 0.8 V4 H14.2Z" fill="#5aa0e8" stroke="#8a9ad8" stroke-width="0.6"/><ellipse cx="6.2" cy="7.9" rx="4.6" ry="4.1" transform="rotate(-28 6.2 7.9)" fill="#1f7edc"/><path d="M3.2 7.4 Q6 6 9.8 7.6" stroke="#bfe8ff" stroke-width="1.1" fill="none"/><path d="M3.8 9.6 Q6.5 11.6 9.6 9.8" stroke="#7cc8f8" stroke-width="1" fill="none"/><ellipse cx="5.6" cy="5.4" rx="2" ry="1.1" fill="#5ec0f8" opacity="0.9"/><path d="M1.6 12.4 Q1.4 5 10.4 3.6" stroke="#2ea4ec" stroke-width="1.2" fill="none"/></svg>
<div class="t k" style="left:53.8px;top:341px;font-size:10.5px;letter-spacing:-0.50px;transform:scaleX(0.959);transform-origin:0 0;">kids.html</div>
<div class="a" style="left:28px;top:365px;width:8px;height:1px;background:#cfcfcf"></div>
<svg class="a" style="left:35px;top:358px;" width="15" height="15" viewBox="0 0 15 15"><defs><linearGradient id="pg" x1="0" y1="0" x2="1" y2="1"><stop offset="0" stop-color="#ffffff"/><stop offset="1" stop-color="#d4dcfa"/></linearGradient></defs><path d="M4 0.8 H11 L14.2 4 V14 H4Z" fill="url(#pg)" stroke="#9d9dd8" stroke-width="1"/><path d="M4 14 H14.2" stroke="#7c7cb4" stroke-width="1"/><path d="M11 0.8 V4 H14.2Z" fill="#5aa0e8" stroke="#8a9ad8" stroke-width="0.6"/><ellipse cx="6.2" cy="7.9" rx="4.6" ry="4.1" transform="rotate(-28 6.2 7.9)" fill="#1f7edc"/><path d="M3.2 7.4 Q6 6 9.8 7.6" stroke="#bfe8ff" stroke-width="1.1" fill="none"/><path d="M3.8 9.6 Q6.5 11.6 9.6 9.8" stroke="#7cc8f8" stroke-width="1" fill="none"/><ellipse cx="5.6" cy="5.4" rx="2" ry="1.1" fill="#5ec0f8" opacity="0.9"/><path d="M1.6 12.4 Q1.4 5 10.4 3.6" stroke="#2ea4ec" stroke-width="1.2" fill="none"/></svg>
<div class="t k" style="left:53.8px;top:355px;font-size:10.5px;letter-spacing:-0.50px;transform:scaleX(0.977);transform-origin:0 0;">location.html</div>
<div class="a" style="left:28px;top:379px;width:8px;height:1px;background:#cfcfcf"></div>
<svg class="a" style="left:35px;top:372px;" width="15" height="15" viewBox="0 0 15 15"><defs><linearGradient id="pg" x1="0" y1="0" x2="1" y2="1"><stop offset="0" stop-color="#ffffff"/><stop offset="1" stop-color="#d4dcfa"/></linearGradient></defs><path d="M4 0.8 H11 L14.2 4 V14 H4Z" fill="url(#pg)" stroke="#9d9dd8" stroke-width="1"/><path d="M4 14 H14.2" stroke="#7c7cb4" stroke-width="1"/><path d="M11 0.8 V4 H14.2Z" fill="#5aa0e8" stroke="#8a9ad8" stroke-width="0.6"/><ellipse cx="6.2" cy="7.9" rx="4.6" ry="4.1" transform="rotate(-28 6.2 7.9)" fill="#1f7edc"/><path d="M3.2 7.4 Q6 6 9.8 7.6" stroke="#bfe8ff" stroke-width="1.1" fill="none"/><path d="M3.8 9.6 Q6.5 11.6 9.6 9.8" stroke="#7cc8f8" stroke-width="1" fill="none"/><ellipse cx="5.6" cy="5.4" rx="2" ry="1.1" fill="#5ec0f8" opacity="0.9"/><path d="M1.6 12.4 Q1.4 5 10.4 3.6" stroke="#2ea4ec" stroke-width="1.2" fill="none"/></svg>
<div class="t k" style="left:53.8px;top:369px;font-size:10.5px;letter-spacing:-0.50px;transform:scaleX(0.972);transform-origin:0 0;">meetings-events.html</div>
<div class="a" style="left:28px;top:394px;width:8px;height:1px;background:#cfcfcf"></div>
<svg class="a" style="left:35px;top:387px;" width="15" height="15" viewBox="0 0 15 15"><defs><linearGradient id="pg" x1="0" y1="0" x2="1" y2="1"><stop offset="0" stop-color="#ffffff"/><stop offset="1" stop-color="#d4dcfa"/></linearGradient></defs><path d="M4 0.8 H11 L14.2 4 V14 H4Z" fill="url(#pg)" stroke="#9d9dd8" stroke-width="1"/><path d="M4 14 H14.2" stroke="#7c7cb4" stroke-width="1"/><path d="M11 0.8 V4 H14.2Z" fill="#5aa0e8" stroke="#8a9ad8" stroke-width="0.6"/><ellipse cx="6.2" cy="7.9" rx="4.6" ry="4.1" transform="rotate(-28 6.2 7.9)" fill="#1f7edc"/><path d="M3.2 7.4 Q6 6 9.8 7.6" stroke="#bfe8ff" stroke-width="1.1" fill="none"/><path d="M3.8 9.6 Q6.5 11.6 9.6 9.8" stroke="#7cc8f8" stroke-width="1" fill="none"/><ellipse cx="5.6" cy="5.4" rx="2" ry="1.1" fill="#5ec0f8" opacity="0.9"/><path d="M1.6 12.4 Q1.4 5 10.4 3.6" stroke="#2ea4ec" stroke-width="1.2" fill="none"/></svg>
<div class="t k" style="left:53.8px;top:384px;font-size:10.5px;letter-spacing:-0.47px;">newsletter-registration.html</div>
<div class="a" style="left:28px;top:408px;width:8px;height:1px;background:#cfcfcf"></div>
<svg class="a" style="left:35px;top:401px;" width="15" height="15" viewBox="0 0 15 15"><defs><linearGradient id="pg" x1="0" y1="0" x2="1" y2="1"><stop offset="0" stop-color="#ffffff"/><stop offset="1" stop-color="#d4dcfa"/></linearGradient></defs><path d="M4 0.8 H11 L14.2 4 V14 H4Z" fill="url(#pg)" stroke="#9d9dd8" stroke-width="1"/><path d="M4 14 H14.2" stroke="#7c7cb4" stroke-width="1"/><path d="M11 0.8 V4 H14.2Z" fill="#5aa0e8" stroke="#8a9ad8" stroke-width="0.6"/><ellipse cx="6.2" cy="7.9" rx="4.6" ry="4.1" transform="rotate(-28 6.2 7.9)" fill="#1f7edc"/><path d="M3.2 7.4 Q6 6 9.8 7.6" stroke="#bfe8ff" stroke-width="1.1" fill="none"/><path d="M3.8 9.6 Q6.5 11.6 9.6 9.8" stroke="#7cc8f8" stroke-width="1" fill="none"/><ellipse cx="5.6" cy="5.4" rx="2" ry="1.1" fill="#5ec0f8" opacity="0.9"/><path d="M1.6 12.4 Q1.4 5 10.4 3.6" stroke="#2ea4ec" stroke-width="1.2" fill="none"/></svg>
<div class="t k" style="left:53.8px;top:398px;font-size:10.5px;letter-spacing:-0.40px;">offers.html</div>
<div class="a" style="left:28px;top:422px;width:8px;height:1px;background:#cfcfcf"></div>
<svg class="a" style="left:35px;top:415px;" width="15" height="15" viewBox="0 0 15 15"><defs><linearGradient id="pg" x1="0" y1="0" x2="1" y2="1"><stop offset="0" stop-color="#ffffff"/><stop offset="1" stop-color="#d4dcfa"/></linearGradient></defs><path d="M4 0.8 H11 L14.2 4 V14 H4Z" fill="url(#pg)" stroke="#9d9dd8" stroke-width="1"/><path d="M4 14 H14.2" stroke="#7c7cb4" stroke-width="1"/><path d="M11 0.8 V4 H14.2Z" fill="#5aa0e8" stroke="#8a9ad8" stroke-width="0.6"/><ellipse cx="6.2" cy="7.9" rx="4.6" ry="4.1" transform="rotate(-28 6.2 7.9)" fill="#1f7edc"/><path d="M3.2 7.4 Q6 6 9.8 7.6" stroke="#bfe8ff" stroke-width="1.1" fill="none"/><path d="M3.8 9.6 Q6.5 11.6 9.6 9.8" stroke="#7cc8f8" stroke-width="1" fill="none"/><ellipse cx="5.6" cy="5.4" rx="2" ry="1.1" fill="#5ec0f8" opacity="0.9"/><path d="M1.6 12.4 Q1.4 5 10.4 3.6" stroke="#2ea4ec" stroke-width="1.2" fill="none"/></svg>
<div class="t k" style="left:53.8px;top:412px;font-size:10.5px;letter-spacing:-0.45px;">privacy.html</div>
<div class="a" style="left:28px;top:436px;width:8px;height:1px;background:#cfcfcf"></div>
<svg class="a" style="left:35px;top:429px;" width="15" height="15" viewBox="0 0 15 15"><defs><linearGradient id="pg" x1="0" y1="0" x2="1" y2="1"><stop offset="0" stop-color="#ffffff"/><stop offset="1" stop-color="#d4dcfa"/></linearGradient></defs><path d="M4 0.8 H11 L14.2 4 V14 H4Z" fill="url(#pg)" stroke="#9d9dd8" stroke-width="1"/><path d="M4 14 H14.2" stroke="#7c7cb4" stroke-width="1"/><path d="M11 0.8 V4 H14.2Z" fill="#5aa0e8" stroke="#8a9ad8" stroke-width="0.6"/><ellipse cx="6.2" cy="7.9" rx="4.6" ry="4.1" transform="rotate(-28 6.2 7.9)" fill="#1f7edc"/><path d="M3.2 7.4 Q6 6 9.8 7.6" stroke="#bfe8ff" stroke-width="1.1" fill="none"/><path d="M3.8 9.6 Q6.5 11.6 9.6 9.8" stroke="#7cc8f8" stroke-width="1" fill="none"/><ellipse cx="5.6" cy="5.4" rx="2" ry="1.1" fill="#5ec0f8" opacity="0.9"/><path d="M1.6 12.4 Q1.4 5 10.4 3.6" stroke="#2ea4ec" stroke-width="1.2" fill="none"/></svg>
<div class="t k" style="left:53.8px;top:426px;font-size:10.5px;letter-spacing:-0.50px;transform:scaleX(0.950);transform-origin:0 0;">sitemap.html</div>
<div class="a" style="left:28px;top:450px;width:8px;height:1px;background:#cfcfcf"></div>
<svg class="a" style="left:35px;top:443px;" width="15" height="15" viewBox="0 0 15 15"><defs><linearGradient id="pg" x1="0" y1="0" x2="1" y2="1"><stop offset="0" stop-color="#ffffff"/><stop offset="1" stop-color="#d4dcfa"/></linearGradient></defs><path d="M4 0.8 H11 L14.2 4 V14 H4Z" fill="url(#pg)" stroke="#9d9dd8" stroke-width="1"/><path d="M4 14 H14.2" stroke="#7c7cb4" stroke-width="1"/><path d="M11 0.8 V4 H14.2Z" fill="#5aa0e8" stroke="#8a9ad8" stroke-width="0.6"/><ellipse cx="6.2" cy="7.9" rx="4.6" ry="4.1" transform="rotate(-28 6.2 7.9)" fill="#1f7edc"/><path d="M3.2 7.4 Q6 6 9.8 7.6" stroke="#bfe8ff" stroke-width="1.1" fill="none"/><path d="M3.8 9.6 Q6.5 11.6 9.6 9.8" stroke="#7cc8f8" stroke-width="1" fill="none"/><ellipse cx="5.6" cy="5.4" rx="2" ry="1.1" fill="#5ec0f8" opacity="0.9"/><path d="M1.6 12.4 Q1.4 5 10.4 3.6" stroke="#2ea4ec" stroke-width="1.2" fill="none"/></svg>
<div class="t k" style="left:53.8px;top:440px;font-size:10.5px;letter-spacing:-0.50px;transform:scaleX(0.953);transform-origin:0 0;">spa.html</div>
<div class="a" style="left:28px;top:465px;width:8px;height:1px;background:#cfcfcf"></div>
<svg class="a" style="left:35px;top:458px;" width="15" height="15" viewBox="0 0 15 15"><defs><linearGradient id="pg" x1="0" y1="0" x2="1" y2="1"><stop offset="0" stop-color="#ffffff"/><stop offset="1" stop-color="#d4dcfa"/></linearGradient></defs><path d="M4 0.8 H11 L14.2 4 V14 H4Z" fill="url(#pg)" stroke="#9d9dd8" stroke-width="1"/><path d="M4 14 H14.2" stroke="#7c7cb4" stroke-width="1"/><path d="M11 0.8 V4 H14.2Z" fill="#5aa0e8" stroke="#8a9ad8" stroke-width="0.6"/><ellipse cx="6.2" cy="7.9" rx="4.6" ry="4.1" transform="rotate(-28 6.2 7.9)" fill="#1f7edc"/><path d="M3.2 7.4 Q6 6 9.8 7.6" stroke="#bfe8ff" stroke-width="1.1" fill="none"/><path d="M3.8 9.6 Q6.5 11.6 9.6 9.8" stroke="#7cc8f8" stroke-width="1" fill="none"/><ellipse cx="5.6" cy="5.4" rx="2" ry="1.1" fill="#5ec0f8" opacity="0.9"/><path d="M1.6 12.4 Q1.4 5 10.4 3.6" stroke="#2ea4ec" stroke-width="1.2" fill="none"/></svg>
<div class="t k" style="left:53.8px;top:455px;font-size:10.5px;letter-spacing:-0.50px;transform:scaleX(0.952);transform-origin:0 0;">sports-academies.html</div>
<div class="a" style="left:28px;top:479px;width:8px;height:1px;background:#cfcfcf"></div>
<svg class="a" style="left:35px;top:472px;" width="15" height="15" viewBox="0 0 15 15"><defs><linearGradient id="pg" x1="0" y1="0" x2="1" y2="1"><stop offset="0" stop-color="#ffffff"/><stop offset="1" stop-color="#d4dcfa"/></linearGradient></defs><path d="M4 0.8 H11 L14.2 4 V14 H4Z" fill="url(#pg)" stroke="#9d9dd8" stroke-width="1"/><path d="M4 14 H14.2" stroke="#7c7cb4" stroke-width="1"/><path d="M11 0.8 V4 H14.2Z" fill="#5aa0e8" stroke="#8a9ad8" stroke-width="0.6"/><ellipse cx="6.2" cy="7.9" rx="4.6" ry="4.1" transform="rotate(-28 6.2 7.9)" fill="#1f7edc"/><path d="M3.2 7.4 Q6 6 9.8 7.6" stroke="#bfe8ff" stroke-width="1.1" fill="none"/><path d="M3.8 9.6 Q6.5 11.6 9.6 9.8" stroke="#7cc8f8" stroke-width="1" fill="none"/><ellipse cx="5.6" cy="5.4" rx="2" ry="1.1" fill="#5ec0f8" opacity="0.9"/><path d="M1.6 12.4 Q1.4 5 10.4 3.6" stroke="#2ea4ec" stroke-width="1.2" fill="none"/></svg>
<div class="t k" style="left:53.8px;top:469px;font-size:10.5px;letter-spacing:-0.50px;transform:scaleX(0.968);transform-origin:0 0;">terms-conditions.html</div>
<div class="a" style="left:28px;top:493px;width:8px;height:1px;background:#cfcfcf"></div>
<svg class="a" style="left:35px;top:486px;" width="15" height="15" viewBox="0 0 15 15"><defs><linearGradient id="pg" x1="0" y1="0" x2="1" y2="1"><stop offset="0" stop-color="#ffffff"/><stop offset="1" stop-color="#d4dcfa"/></linearGradient></defs><path d="M4 0.8 H11 L14.2 4 V14 H4Z" fill="url(#pg)" stroke="#9d9dd8" stroke-width="1"/><path d="M4 14 H14.2" stroke="#7c7cb4" stroke-width="1"/><path d="M11 0.8 V4 H14.2Z" fill="#5aa0e8" stroke="#8a9ad8" stroke-width="0.6"/><ellipse cx="6.2" cy="7.9" rx="4.6" ry="4.1" transform="rotate(-28 6.2 7.9)" fill="#1f7edc"/><path d="M3.2 7.4 Q6 6 9.8 7.6" stroke="#bfe8ff" stroke-width="1.1" fill="none"/><path d="M3.8 9.6 Q6.5 11.6 9.6 9.8" stroke="#7cc8f8" stroke-width="1" fill="none"/><ellipse cx="5.6" cy="5.4" rx="2" ry="1.1" fill="#5ec0f8" opacity="0.9"/><path d="M1.6 12.4 Q1.4 5 10.4 3.6" stroke="#2ea4ec" stroke-width="1.2" fill="none"/></svg>
<div class="t k" style="left:53.8px;top:483px;font-size:10.5px;letter-spacing:-0.50px;">things-to-do.html</div>
<div class="a" style="left:236px;top:42px;width:765px;height:669px;background:#fff;border:1px solid #a0a0a0"></div>
<div class="a" style="left:237px;top:43px;width:763px;height:19px;background:#f0f0f0"></div>
<div class="a" style="left:237px;top:62px;width:763px;height:1px;background:#a0a0a0"></div>
<div class="a" style="left:237px;top:62px;width:763px;height:1px;background:#8a8a8a"></div>
<svg class="a" style="left:240px;top:44px;" width="79" height="20" viewBox="0 0 79 20"><path d="M0.5 18.6 L15.5 3 Q17 1.5 19 1.5 H74 Q76.5 1.5 76.5 4 V18.6" fill="#fff" stroke="#8c8c8c" stroke-width="1.1"/><rect x="1.6" y="18" width="74.3" height="2" fill="#fff"/></svg>
<div class="t" style="left:257.8px;top:43px;font-size:11px;letter-spacing:-0.48px;font-weight:bold;color:#000;">about.html</div>
<svg class="a" style="left:970px;top:52px;" width="8" height="5" viewBox="0 0 8 5"><path d="M0 0 H8 L4 5Z" fill="#000"/></svg>
<svg class="a" style="left:984px;top:50px;" width="8" height="8" viewBox="0 0 8 8"><path d="M0.6 0.6 L7.4 7.4 M7.4 0.6 L0.6 7.4" stroke="#000" stroke-width="1.6"/></svg>
<div class="a" style="left:237px;top:63px;width:763px;height:21px;background:linear-gradient(#fbfbfb,#f3f3f3 70%,#eeeeee)"></div>
<div class="a" style="left:998px;top:63px;width:1px;height:20px;background:#9a9a9a"></div>
<svg class="a" style="left:240px;top:68px;" width="12" height="12" viewBox="0 0 12 12"><defs><linearGradient id="fg" x1="0" y1="0" x2="1" y2="1"><stop offset="0" stop-color="#9090f4"/><stop offset="0.5" stop-color="#4a4ad8"/><stop offset="1" stop-color="#20209a"/></linearGradient></defs><rect x="0" y="0" width="12" height="12" rx="1" fill="url(#fg)"/><rect x="3" y="1" width="6" height="4.5" fill="#f4f4ff"/><rect x="3.5" y="8" width="5" height="3.5" fill="#181830"/><rect x="6" y="8.8" width="1.8" height="2" fill="#ddd"/></svg>
<svg class="a" style="left:259px;top:68px;" width="13" height="12" viewBox="0 0 13 12"><rect x="0.5" y="0.5" width="12" height="11" fill="#f4f8ff" stroke="#5a6f98"/><rect x="1" y="1" width="11" height="2.2" fill="#3d7ae6"/><path d="M4.5 3 V11 M8.5 3 V11 M1 5.7 H12 M1 8.4 H12" stroke="#9cb6e0" stroke-width="1"/><path d="M0.5 11.5 H12.5 V0.5" stroke="#445a80" fill="none"/></svg>
<div class="a" style="left:278px;top:69px;width:1px;height:11px;background:#c8c8c8"></div>
<div class="t" style="left:284.7px;top:63px;font-size:11px;letter-spacing:-0.50px;color:#000;transform:scaleX(0.991);transform-origin:0 0;">Show All Marks</div>
<svg class="a" style="left:357px;top:73px;" width="6" height="4" viewBox="0 0 6 4"><path d="M0 0 H6 L3 3.5Z" fill="#000"/></svg>
<div class="a" style="left:986px;top:84px;width:14px;height:612px;background:#f0f0f0"></div>
<svg class="a" style="left:989px;top:91px;" width="8" height="5" viewBox="0 0 8 5"><path d="M0.8 4.2 L4.0 0.9 L7.2 4.2" fill="none" stroke="#303030" stroke-width="1.6"/></svg>
<svg class="a" style="left:989px;top:685px;" width="8" height="5" viewBox="0 0 8 5"><path d="M0.8 0.8 L4.0 4.1 L7.2 0.8" fill="none" stroke="#303030" stroke-width="1.6"/></svg>
<div class="a" style="left:237px;top:696px;width:763px;height:14px;background:#f0f0f0"></div>
<div class="a" style="left:252px;top:697px;width:191px;height:12px;background:#cdcdcd"></div>
<svg class="a" style="left:241px;top:699px;" width="6" height="8" viewBox="0 0 6 8"><path d="M5 0.8 L1.2 4 L5 7.2" fill="none" stroke="#303030" stroke-width="1.6"/></svg>
<svg class="a" style="left:976px;top:699px;" width="6" height="8" viewBox="0 0 6 8"><path d="M1 0.8 L4.8 4 L1 7.2" fill="none" stroke="#303030" stroke-width="1.6"/></svg>
<div class="mono" style="left:332.4px;top:82px;letter-spacing:0.24px">&lt;a style="font-weight: bold" href="javascript:window.location.href=AddOrientation('/accommodation/concierge');</div>
<div class="mono" style="left:308.6px;top:95px;letter-spacing:0.24px">&lt;/<b>li</b>&gt;</div>
<div class="mono" style="left:522.4px;top:107px;letter-spacing:0.24px">&lt;/<b>ul</b>&gt;</div>
<div class="mono" style="left:498.7px;top:120px;letter-spacing:0.24px">&lt;/<b>section</b>&gt;</div>
<div class="mono" style="left:498.7px;top:132px;letter-spacing:0.24px">&lt;/<b>div</b>&gt;</div>
<div class="mono" style="left:308.6px;top:369px;letter-spacing:0.24px">&lt;<b>li</b>&gt;</div>
<div class="mono" style="left:308.6px;top:431px;letter-spacing:0.24px">&lt;<b>li</b>&gt;</div>
<div class="mono" style="left:308.6px;top:493px;letter-spacing:0.24px">&lt;<b>li</b>&gt;</div>
<div class="mono" style="left:308.6px;top:555px;letter-spacing:0.24px">&lt;<b>li</b>&gt;</div>
<div class="mono" style="left:308.6px;top:618px;letter-spacing:0.24px">&lt;<b>li</b>&gt;</div>
<div class="mono" style="left:308.6px;top:680px;letter-spacing:0.24px">&lt;<b>li</b>&gt;</div>
<div class="mono" style="left:332.4px;top:406px;letter-spacing:0.24px">&lt;a style="" href="javascript:window.location.href=AddOrientation('/dining/</div>
<div class="mono" style="left:332.4px;top:468px;letter-spacing:0.24px">&lt;a style="" href="javascript:window.location.href=AddOrientation('/dining/</div>
<div class="mono" style="left:332.4px;top:530px;letter-spacing:0.24px">&lt;a style="" href="javascript:window.location.href=AddOrientation('/dining/</div>
<div class="mono" style="left:332.4px;top:593px;letter-spacing:0.24px">&lt;a style="" href="javascript:window.location.href=AddOrientation('/dining/sel-de-mer');"&gt;</div>
<div class="mono" style="left:332.4px;top:655px;letter-spacing:0.24px">&lt;a style="" href="javascript:window.location.href=AddOrientation('/dining/morjana-restau');" <span style="color:#1010c0;font-weight:bold">Morjana Restaur</span></div>
<div class="mono" style="left:308.6px;top:418px;letter-spacing:0.24px">&lt;/<b>li</b>&gt;</div>
<div class="mono" style="left:308.6px;top:481px;letter-spacing:0.24px">&lt;/<b>li</b>&gt;</div>
<div class="mono" style="left:308.6px;top:543px;letter-spacing:0.24px">&lt;/<b>li</b>&gt;</div>
<div class="mono" style="left:308.6px;top:605px;letter-spacing:0.24px">&lt;/<b>li</b>&gt;</div>
<div class="mono" style="left:308.6px;top:667px;letter-spacing:0.24px">&lt;/<b>li</b>&gt;</div>
<div class="a" style="left:1004px;top:42px;width:296px;height:16px;background:#6e6e6e"></div>
<div class="t" style="left:1009.0px;top:41px;font-size:11px;letter-spacing:-0.50px;color:#101010;-webkit-text-stroke:0.25px #101010;transform:scaleX(0.894);transform-origin:0 0;">Scan</div>
<svg class="a" style="left:1277px;top:47px;" width="7" height="9" viewBox="0 0 7 9"><path d="M1.5 0.5 H5.5 M2 0.5 V5 M5 0.5 V5 M0.5 5.5 H6.5 M3.5 5.5 V9" stroke="#000" stroke-width="1.1" fill="none"/><rect x="2" y="1" width="1.5" height="4" fill="#000"/></svg>
<svg class="a" style="left:1291px;top:47px;" width="8" height="8" viewBox="0 0 8 8"><path d="M0.6 0.6 L7.4 7.4 M7.4 0.6 L0.6 7.4" stroke="#000" stroke-width="1.6"/></svg>
<div class="a" style="left:1003px;top:58px;width:297px;height:653px;background:#f0f0f0;border-bottom:1px solid #dadada"></div>
<div class="a" style="left:1014px;top:75px;width:279px;height:38px;border:1px solid #dcdcdc;border-radius:1px"></div>
<div class="a" style="left:1018.9px;top:74px;width:29.9px;height:3px;background:#f0f0f0"></div>
<div class="t k" style="left:1020.9px;top:65px;font-size:10.5px;letter-spacing:-0.50px;transform:scaleX(0.889);transform-origin:0 0;">Scope</div>
<svg class="a" style="left:1022px;top:87px;" width="13" height="13" viewBox="0 0 13 13"><circle cx="6.5" cy="6.5" r="5.7" fill="#fff" stroke="#333" stroke-width="1"/><circle cx="6.5" cy="6.5" r="3.2" fill="#222"/></svg>
<div class="t k" style="left:1037.9px;top:84px;font-size:10.5px;letter-spacing:-0.50px;transform:scaleX(0.891);transform-origin:0 0;">All Files</div>
<svg class="a" style="left:1078px;top:87px;" width="13" height="13" viewBox="0 0 13 13"><circle cx="6.5" cy="6.5" r="5.7" fill="#fff" stroke="#333" stroke-width="1"/></svg>
<div class="t k" style="left:1094.0px;top:84px;font-size:10.5px;letter-spacing:-0.50px;transform:scaleX(0.897);transform-origin:0 0;">Open Files</div>
<svg class="a" style="left:1147px;top:87px;" width="13" height="13" viewBox="0 0 13 13"><circle cx="6.5" cy="6.5" r="5.7" fill="#fff" stroke="#333" stroke-width="1"/></svg>
<div class="t k" style="left:1162.7px;top:84px;font-size:10.5px;letter-spacing:-0.50px;transform:scaleX(0.920);transform-origin:0 0;">Selected File</div>
<div class="a" style="left:1014px;top:126px;width:279px;height:38px;border:1px solid #dcdcdc;border-radius:1px"></div>
<div class="a" style="left:1019px;top:125px;width:34px;height:3px;background:#f0f0f0"></div>
<div class="t k" style="left:1021.0px;top:116px;font-size:10.5px;letter-spacing:-0.50px;color:#a0a0a0;transform:scaleX(0.935);transform-origin:0 0;">Include</div>
<svg class="a" style="left:1022px;top:138px;" width="12" height="12" viewBox="0 0 12 12"><rect x="0.5" y="0.5" width="11" height="11" fill="#f0f0f0" stroke="#bcbcbc"/><path d="M2.2 6 L4.6 8.5 L9.6 3" fill="none" stroke="#bcbcbc" stroke-width="1.2"/></svg>
<div class="t k" style="left:1038.6px;top:134px;font-size:10.5px;letter-spacing:-0.50px;color:#a0a0a0;transform:scaleX(0.901);transform-origin:0 0;">Source Code Files</div>
<svg class="a" style="left:1122px;top:138px;" width="12" height="12" viewBox="0 0 12 12"><rect x="0.5" y="0.5" width="11" height="11" fill="#f0f0f0" stroke="#bcbcbc"/></svg>
<div class="t k" style="left:1137.7px;top:134px;font-size:10.5px;letter-spacing:-0.50px;color:#a0a0a0;transform:scaleX(0.915);transform-origin:0 0;">Resource Files</div>
<div class="a" style="left:1014px;top:177px;width:279px;height:210px;border:1px solid #dcdcdc;border-radius:1px"></div>
<div class="a" style="left:1019px;top:176px;width:62px;height:3px;background:#f0f0f0"></div>
<div class="t k" style="left:1021.0px;top:167px;font-size:10.5px;letter-spacing:-0.50px;transform:scaleX(0.974);transform-origin:0 0;">Scan Options</div>
<div class="t k" style="left:1021.5px;top:185px;font-size:10.5px;letter-spacing:-0.50px;transform:scaleX(0.898);transform-origin:0 0;">Languages</div>
<div class="a" style="left:1022px;top:202px;width:263px;height:76px;background:#fff;border:1px solid #9a9a9a"></div>
<div class="a" style="left:1037px;top:205px;width:231px;height:14px;background:#0078d7"></div>
<div class="t k" style="left:1039.5px;top:201px;font-size:10.5px;letter-spacing:-0.50px;color:#fff;transform:scaleX(0.818);transform-origin:0 0;">HTML</div>
<svg class="a" style="left:1024px;top:205px;" width="12" height="12" viewBox="0 0 12 12"><rect x="0.5" y="0.5" width="11" height="11" fill="#fff" stroke="#444"/><path d="M2.2 6 L4.6 8.5 L9.6 3" fill="none" stroke="#444" stroke-width="1.2"/></svg>
<svg class="a" style="left:1024px;top:220px;" width="12" height="12" viewBox="0 0 12 12"><rect x="0.5" y="0.5" width="11" height="11" fill="#fff" stroke="#444"/></svg>
<div class="t k" style="left:1040.0px;top:217px;font-size:10.5px;letter-spacing:-0.75px;">VBScript</div>
<div class="a" style="left:1269px;top:203px;width:15px;height:74px;background:#f0f0f0"></div>
<svg class="a" style="left:1272px;top:210px;" width="8" height="5" viewBox="0 0 8 5"><path d="M0.8 4.2 L4.0 0.9 L7.2 4.2" fill="none" stroke="#404040" stroke-width="1.6"/></svg>
<div class="a" style="left:1270px;top:220px;width:12px;height:23px;background:#cdcdcd"></div>
<svg class="a" style="left:1272px;top:266px;" width="8" height="5" viewBox="0 0 8 5"><path d="M0.8 0.8 L4.0 4.1 L7.2 0.8" fill="none" stroke="#404040" stroke-width="1.6"/></svg>
<div class="a" style="left:1022px;top:305px;width:263px;height:61px;background:#fff;border:1px solid #9a9a9a"></div>
<div class="a" style="left:1230px;top:395px;width:62px;height:19px;background:#e1e1e1;border:1px solid #adadad"></div>
<div class="t k" style="left:1249.0px;top:395px;font-size:10.5px;letter-spacing:-0.50px;transform:scaleX(0.889);transform-origin:0 0;">Scan</div>
<div class="t" style="left:3.5px;top:712px;font-size:11px;letter-spacing:-0.50px;color:#000;transform:scaleX(0.985);transform-origin:0 0;">Scan Completed with 0 Errors</div>
<div class="a" style="left:298px;top:713px;width:1px;height:17px;background:#a8a8a8"></div>
<div class="a" style="left:347px;top:138px;width:611px;height:453px;background:#f0f0f0;border:1px solid #b9b9b9;box-shadow:0 1px 10px 1px rgba(0,0,0,0.16)"></div>
<div class="a" style="left:348px;top:139px;width:609px;height:23px;background:#fff"></div>
<svg class="a" style="left:350px;top:143px;" width="13" height="13" viewBox="0 0 13 13"><defs><radialGradient id="ay" cx="0.4" cy="0.35" r="0.7"><stop offset="0" stop-color="#ffe98a"/><stop offset="1" stop-color="#e3a400"/></radialGradient><radialGradient id="ar" cx="0.5" cy="0.35" r="0.7"><stop offset="0" stop-color="#f27a7a"/><stop offset="1" stop-color="#b01414"/></radialGradient><linearGradient id="ab" x1="0" y1="0" x2="0" y2="1"><stop offset="0" stop-color="#8ec0ff"/><stop offset="1" stop-color="#2b6fdc"/></linearGradient></defs><rect x="0.5" y="0.5" width="12" height="12" fill="#f6f6f6" stroke="#cfcfcf"/><rect x="1.2" y="4" width="3.6" height="5.3" rx="0.5" fill="url(#ar)"/><rect x="5.2" y="0.9" width="6.6" height="6.6" rx="0.6" fill="url(#ay)" stroke="#c89410" stroke-width="0.5"/><rect x="5.2" y="7.9" width="5" height="3.8" rx="0.5" fill="url(#ab)"/></svg>
<div class="t" style="left:367.6px;top:140px;font-size:11px;letter-spacing:-0.50px;color:#9a9a9a;transform:scaleX(0.993);transform-origin:0 0;">Project Settings</div>
<svg class="a" style="left:938px;top:146px;" width="10" height="10" viewBox="0 0 10 10"><path d="M0.6 0.6 L9.4 9.4 M9.4 0.6 L0.6 9.4" stroke="#8a8a8a" stroke-width="1"/></svg>
<div class="a" style="left:358px;top:172px;width:166px;height:386px;background:#fff;border:1px solid #828790"></div>
<div class="a" style="left:386px;top:187px;width:1px;height:38px;background:#c8c8c8"></div>
<div class="a" style="left:402px;top:229px;width:1px;height:124px;background:#c8c8c8"></div>
<svg class="a" style="left:365px;top:178px;" width="9" height="9" viewBox="0 0 9 9"><defs><linearGradient id="eg" x1="0" y1="0" x2="1" y2="1"><stop offset="0" stop-color="#ffffff"/><stop offset="1" stop-color="#d8d8d8"/></linearGradient></defs><rect x="0.5" y="0.5" width="8" height="8" rx="1" fill="url(#eg)" stroke="#9a9a9a"/><path d="M2.5 4.5 H6.5" stroke="#3b5bb5" stroke-width="1.2"/></svg>
<div class="a" style="left:374px;top:182px;width:4px;height:1px;background:#c8c8c8"></div>
<div class="t k" style="left:380.0px;top:171px;font-size:10.5px;letter-spacing:-0.50px;transform:scaleX(0.937);transform-origin:0 0;">Project Settings</div>
<div class="a" style="left:387px;top:196px;width:7px;height:1px;background:#c8c8c8"></div>
<div class="t k" style="left:396.0px;top:185px;font-size:10.5px;letter-spacing:-0.50px;transform:scaleX(0.905);transform-origin:0 0;">File Extensions</div>
<div class="a" style="left:387px;top:210px;width:7px;height:1px;background:#c8c8c8"></div>
<div class="t k" style="left:396.0px;top:199px;font-size:10.5px;letter-spacing:-0.50px;transform:scaleX(0.889);transform-origin:0 0;">Marks</div>
<svg class="a" style="left:382px;top:220px;" width="9" height="9" viewBox="0 0 9 9"><defs><linearGradient id="eg" x1="0" y1="0" x2="1" y2="1"><stop offset="0" stop-color="#ffffff"/><stop offset="1" stop-color="#d8d8d8"/></linearGradient></defs><rect x="0.5" y="0.5" width="8" height="8" rx="1" fill="url(#eg)" stroke="#9a9a9a"/><path d="M2.5 4.5 H6.5" stroke="#3b5bb5" stroke-width="1.2"/></svg>
<div class="a" style="left:391px;top:224px;width:3px;height:1px;background:#c8c8c8"></div>
<div class="t k" style="left:396.0px;top:214px;font-size:10.5px;letter-spacing:-0.50px;transform:scaleX(0.898);transform-origin:0 0;">Languages</div>
<div class="a" style="left:403px;top:238px;width:7px;height:1px;background:#c8c8c8"></div>
<div class="t k" style="left:411.8px;top:228px;font-size:10.5px;letter-spacing:-0.50px;transform:scaleX(0.945);transform-origin:0 0;">HTML</div>
<div class="a" style="left:403px;top:253px;width:7px;height:1px;background:#c8c8c8"></div>
<div class="t k" style="left:411.8px;top:242px;font-size:10.5px;letter-spacing:-0.50px;transform:scaleX(0.920);transform-origin:0 0;">VBScript</div>
<div class="a" style="left:403px;top:267px;width:7px;height:1px;background:#c8c8c8"></div>
<div class="t k" style="left:411.8px;top:256px;font-size:10.5px;letter-spacing:-0.50px;transform:scaleX(0.889);transform-origin:0 0;">VB</div>
<div class="a" style="left:403px;top:281px;width:7px;height:1px;background:#c8c8c8"></div>
<div class="t k" style="left:411.8px;top:271px;font-size:10.5px;letter-spacing:-0.50px;transform:scaleX(0.955);transform-origin:0 0;">JavaScript</div>
<div class="a" style="left:403px;top:295px;width:7px;height:1px;background:#c8c8c8"></div>
<div class="t k" style="left:411.8px;top:285px;font-size:10.5px;letter-spacing:-0.50px;transform:scaleX(0.951);transform-origin:0 0;">cSharp</div>
<div class="a" style="left:403px;top:309px;width:7px;height:1px;background:#c8c8c8"></div>
<div class="t k" style="left:411.8px;top:299px;font-size:10.5px;letter-spacing:-0.50px;transform:scaleX(0.930);transform-origin:0 0;">SQL</div>
<div class="a" style="left:403px;top:324px;width:7px;height:1px;background:#c8c8c8"></div>
<div class="t k" style="left:411.8px;top:313px;font-size:10.5px;letter-spacing:-0.50px;transform:scaleX(0.905);transform-origin:0 0;">XML</div>
<div class="a" style="left:403px;top:338px;width:7px;height:1px;background:#c8c8c8"></div>
<div class="t k" style="left:411.8px;top:327px;font-size:10.5px;letter-spacing:-0.50px;transform:scaleX(0.905);transform-origin:0 0;">PHP</div>
<div class="a" style="left:403px;top:352px;width:7px;height:1px;background:#c8c8c8"></div>
<div class="t k" style="left:411.8px;top:341px;font-size:10.5px;letter-spacing:-0.50px;transform:scaleX(0.864);transform-origin:0 0;">CSV</div>
<div class="a" style="left:538px;top:179px;width:403px;height:149px;border:1px solid #dcdcdc;border-radius:1px"></div>
<div class="a" style="left:543px;top:178px;width:27px;height:3px;background:#f0f0f0"></div>
<div class="t k" style="left:545.0px;top:169px;font-size:10.5px;letter-spacing:-0.50px;transform:scaleX(0.846);transform-origin:0 0;">Rules</div>
<div class="a" style="left:542px;top:188px;width:374px;height:133px;background:#fff;border:1px solid #828790"></div>
<div class="a" style="left:621px;top:191px;width:1px;height:19px;background:#e5e5e5"></div>
<div class="a" style="left:808px;top:191px;width:1px;height:19px;background:#e5e5e5"></div>
<div class="a" style="left:894px;top:191px;width:1px;height:19px;background:#e5e5e5"></div>
<div class="t k" style="left:549.3px;top:191px;font-size:10.5px;letter-spacing:-0.50px;transform:scaleX(0.930);transform-origin:0 0;">Type</div>
<div class="t k" style="left:626.3px;top:191px;font-size:10.5px;letter-spacing:-0.50px;">Description</div>
<div class="t k" style="left:813.0px;top:191px;font-size:10.5px;letter-spacing:-0.50px;transform:scaleX(0.926);transform-origin:0 0;">Group</div>
<div class="a" style="left:543px;top:227px;width:357px;height:1px;background:#f0f0f0"></div>
<div class="t k" style="left:549.3px;top:210px;font-size:10.5px;letter-spacing:-0.50px;transform:scaleX(0.916);transform-origin:0 0;">MarkRule</div>
<div class="t k" style="left:626.2px;top:210px;font-size:10.5px;letter-spacing:-0.50px;transform:scaleX(0.961);transform-origin:0 0;">Mark value attribute values as String</div>
<div class="a" style="left:543px;top:242px;width:357px;height:1px;background:#f0f0f0"></div>
<div class="t k" style="left:549.3px;top:225px;font-size:10.5px;letter-spacing:-0.50px;transform:scaleX(0.916);transform-origin:0 0;">MarkRule</div>
<div class="t k" style="left:626.2px;top:225px;font-size:10.5px;letter-spacing:-0.50px;transform:scaleX(0.945);transform-origin:0 0;">Mark b tags as Internal Code</div>
<div class="a" style="left:543px;top:256px;width:357px;height:1px;background:#f0f0f0"></div>
<div class="t k" style="left:549.3px;top:240px;font-size:10.5px;letter-spacing:-0.50px;transform:scaleX(0.916);transform-origin:0 0;">MarkRule</div>
<div class="t k" style="left:626.2px;top:240px;font-size:10.5px;letter-spacing:-0.50px;transform:scaleX(0.945);transform-origin:0 0;">Mark a tags as Internal Code</div>
<div class="a" style="left:543px;top:271px;width:357px;height:1px;background:#f0f0f0"></div>
<div class="t k" style="left:549.3px;top:255px;font-size:10.5px;letter-spacing:-0.50px;transform:scaleX(0.916);transform-origin:0 0;">MarkRule</div>
<div class="t k" style="left:626.2px;top:255px;font-size:10.5px;letter-spacing:-0.50px;transform:scaleX(0.941);transform-origin:0 0;">Mark i tags as Internal Code</div>
<div class="a" style="left:543px;top:286px;width:357px;height:1px;background:#f0f0f0"></div>
<div class="t k" style="left:549.3px;top:271px;font-size:10.5px;letter-spacing:-0.50px;transform:scaleX(0.916);transform-origin:0 0;">MarkRule</div>
<div class="t k" style="left:626.2px;top:271px;font-size:10.5px;letter-spacing:-0.50px;transform:scaleX(0.941);transform-origin:0 0;">Mark style tags as Internal Code</div>
<div class="a" style="left:543px;top:301px;width:357px;height:1px;background:#f0f0f0"></div>
<div class="t k" style="left:549.3px;top:286px;font-size:10.5px;letter-spacing:-0.50px;transform:scaleX(0.916);transform-origin:0 0;">MarkRule</div>
<div class="t k" style="left:626.2px;top:286px;font-size:10.5px;letter-spacing:-0.50px;transform:scaleX(0.945);transform-origin:0 0;">Mark font tags as Internal Code</div>
<div class="a" style="left:543px;top:316px;width:357px;height:1px;background:#f0f0f0"></div>
<div class="t k" style="left:549.3px;top:301px;font-size:10.5px;letter-spacing:-0.50px;transform:scaleX(0.916);transform-origin:0 0;">MarkRule</div>
<div class="t k" style="left:626.2px;top:301px;font-size:10.5px;letter-spacing:-0.50px;transform:scaleX(0.942);transform-origin:0 0;">Mark span tags as Internal Code</div>
<div class="t k" style="left:813.0px;top:210px;font-size:10.5px;letter-spacing:-0.50px;transform:scaleX(0.903);transform-origin:0 0;">EmbededString</div>
<div class="a" style="left:621px;top:211px;width:1px;height:109px;background:#f0f0f0"></div>
<div class="a" style="left:808px;top:211px;width:1px;height:109px;background:#f0f0f0"></div>
<div class="a" style="left:900px;top:189px;width:15px;height:131px;background:#f0f0f0"></div>
<svg class="a" style="left:903px;top:196px;" width="8" height="5" viewBox="0 0 8 5"><path d="M0.8 4.2 L4.0 0.9 L7.2 4.2" fill="none" stroke="#404040" stroke-width="1.6"/></svg>
<div class="a" style="left:921px;top:189px;width:13px;height:15px;background:#e1e1e1;border:1px solid #adadad"></div>
<div class="a" style="left:925px;top:196px;width:5px;height:1.5px;background:#111"></div>
<div class="a" style="left:926.8px;top:194.2px;width:1.5px;height:5px;background:#111"></div>
<div class="a" style="left:921px;top:211px;width:13px;height:15px;background:#e1e1e1;border:1px solid #adadad"></div>
<div class="a" style="left:925.5px;top:218px;width:4px;height:1.5px;background:#222"></div>
<div class="a" style="left:538px;top:340px;width:141px;height:138px;border:1px solid #dcdcdc;border-radius:1px"></div>
<div class="a" style="left:542.5px;top:339px;width:60px;height:3px;background:#f0f0f0"></div>
<div class="t k" style="left:544.5px;top:330px;font-size:10.5px;letter-spacing:-0.50px;transform:scaleX(0.846);transform-origin:0 0;">File Extensions</div>
<div class="a" style="left:542px;top:351px;width:112px;height:96px;background:#fff;border:1px solid #828790"></div>
<div class="t k" style="left:544.8px;top:349px;font-size:10.5px;letter-spacing:-0.50px;transform:scaleX(0.859);transform-origin:0 0;">htm</div>
<div class="t k" style="left:544.8px;top:361px;font-size:10.5px;letter-spacing:-0.50px;transform:scaleX(0.865);transform-origin:0 0;">html</div>
<div class="t k" style="left:544.8px;top:373px;font-size:10.5px;letter-spacing:-0.50px;transform:scaleX(0.870);transform-origin:0 0;">aspx</div>
<div class="t k" style="left:544.8px;top:384px;font-size:10.5px;letter-spacing:-0.50px;transform:scaleX(0.900);transform-origin:0 0;">asp</div>
<div class="t k" style="left:544.8px;top:396px;font-size:10.5px;letter-spacing:-0.50px;transform:scaleX(0.871);transform-origin:0 0;">cf</div>
<div class="t k" style="left:545.8px;top:407px;font-size:10.5px;letter-spacing:-0.50px;transform:scaleX(0.800);transform-origin:0 0;">jsp</div>
<div class="t k" style="left:544.8px;top:419px;font-size:10.5px;letter-spacing:-0.50px;transform:scaleX(0.882);transform-origin:0 0;">php</div>
<div class="a" style="left:660px;top:352px;width:14px;height:15px;background:#e1e1e1;border:1px solid #adadad"></div>
<div class="a" style="left:664.5px;top:359px;width:5px;height:1.5px;background:#111"></div>
<div class="a" style="left:666.3px;top:357.2px;width:1.5px;height:5px;background:#111"></div>
<div class="a" style="left:660px;top:374px;width:14px;height:14px;background:#e1e1e1;border:1px solid #adadad"></div>
<div class="a" style="left:665px;top:380.5px;width:4px;height:1.5px;background:#222"></div>
<div class="a" style="left:542px;top:452px;width:84px;height:19px;background:#fff;border:1px solid #8a8a8a"></div>
<div class="a" style="left:632px;top:452px;width:22px;height:19px;background:#e1e1e1;border:1px solid #adadad"></div>
<svg class="a" style="left:637px;top:456px;" width="12" height="12" viewBox="0 0 12 12"><defs><linearGradient id="fg" x1="0" y1="0" x2="1" y2="1"><stop offset="0" stop-color="#9090f4"/><stop offset="0.5" stop-color="#4a4ad8"/><stop offset="1" stop-color="#20209a"/></linearGradient></defs><rect x="0" y="0" width="12" height="12" rx="1" fill="url(#fg)"/><rect x="3" y="1" width="6" height="4.5" fill="#f4f4ff"/><rect x="3.5" y="8" width="5" height="3.5" fill="#181830"/><rect x="6" y="8.8" width="1.8" height="2" fill="#ddd"/></svg>
<div class="a" style="left:685px;top:340px;width:145px;height:138px;border:1px solid #dcdcdc;border-radius:1px"></div>
<div class="a" style="left:690.3px;top:339px;width:72px;height:3px;background:#f0f0f0"></div>
<div class="t k" style="left:692.3px;top:330px;font-size:10.5px;letter-spacing:-0.50px;transform:scaleX(0.905);transform-origin:0 0;">String Exceptions</div>
<div class="a" style="left:690px;top:351px;width:140px;height:120px;background:#fff;border:1px solid #828790"></div>
<div class="a" style="left:803px;top:354px;width:1px;height:19px;background:#e5e5e5"></div>
<div class="t k" style="left:696.8px;top:353px;font-size:10.5px;letter-spacing:-0.50px;">Description</div>
<div class="t k" style="left:696.0px;top:372px;font-size:10.5px;letter-spacing:-0.50px;transform:scaleX(0.923);transform-origin:0 0;">Only &amp;nbsp;</div>
<div class="t k" style="left:696.0px;top:387px;font-size:10.5px;letter-spacing:-0.50px;transform:scaleX(0.911);transform-origin:0 0;">Only digits</div>
<div class="a" style="left:691px;top:388px;width:119px;height:1px;background:#f0f0f0"></div>
<div class="a" style="left:691px;top:403px;width:119px;height:1px;background:#f0f0f0"></div>
<div class="a" style="left:691px;top:418px;width:119px;height:1px;background:#f0f0f0"></div>
<div class="a" style="left:691px;top:433px;width:119px;height:1px;background:#f0f0f0"></div>
<div class="a" style="left:691px;top:448px;width:119px;height:1px;background:#f0f0f0"></div>
<div class="a" style="left:691px;top:463px;width:119px;height:1px;background:#f0f0f0"></div>
<div class="a" style="left:538px;top:490px;width:196px;height:57px;border:1px solid #dcdcdc;border-radius:1px"></div>
<div class="a" style="left:542.5px;top:489px;width:87.5px;height:3px;background:#f0f0f0"></div>
<div class="t k" style="left:544.5px;top:480px;font-size:10.5px;letter-spacing:-0.50px;transform:scaleX(0.932);transform-origin:0 0;">String Externalization</div>
<div class="t k" style="left:545.5px;top:500px;font-size:10.5px;letter-spacing:-0.25px;">Match</div>
<div class="a" style="left:597px;top:501px;width:129px;height:19px;background:#fff;border:1px solid #8a8a8a"></div>
<div class="t k" style="left:600.0px;top:500px;font-size:10.5px;letter-spacing:-0.29px;">[string]</div>
<div class="t k" style="left:545.5px;top:523px;font-size:10.5px;letter-spacing:-0.50px;transform:scaleX(0.917);transform-origin:0 0;">Replace</div>
<div class="a" style="left:597px;top:524px;width:129px;height:19px;background:#fff;border:1px solid #8a8a8a"></div>
<div class="t k" style="left:600.0px;top:523px;font-size:10.5px;letter-spacing:-0.50px;transform:scaleX(0.949);transform-origin:0 0;">&lt;%=Resource.Get("[key]")&gt;</div>
<div class="a" style="left:745px;top:490px;width:85px;height:57px;border:1px solid #dcdcdc;border-radius:1px"></div>
<div class="a" style="left:750px;top:489px;width:46px;height:3px;background:#f0f0f0"></div>
<div class="t k" style="left:752.0px;top:480px;font-size:10.5px;letter-spacing:-0.50px;transform:scaleX(0.845);transform-origin:0 0;">Comments</div>
<div class="t k" style="left:752.0px;top:500px;font-size:10.5px;letter-spacing:-0.50px;transform:scaleX(0.912);transform-origin:0 0;">Line Comment</div>
<div class="t k" style="left:752.0px;top:523px;font-size:10.5px;letter-spacing:-0.50px;transform:scaleX(0.912);transform-origin:0 0;">Block Comment</div>
<div class="a" style="left:810px;top:224px;width:370px;height:443px;background:#f0f0f0;border:1px solid #d5d5d5;border-left-color:#4a9ae0;border-top-color:#4a9ae0;box-shadow:0 3px 12px 2px rgba(0,0,0,0.22)"></div>
<div class="a" style="left:1179px;top:224px;width:1px;height:23px;background:#4a9ae0"></div>
<div class="a" style="left:812px;top:667px;width:93px;height:1px;background:repeating-linear-gradient(to right,#9a9a9a 0 3px,transparent 3px 6px);opacity:0.45"></div>
<div class="a" style="left:906px;top:667px;width:49px;height:1px;background:repeating-linear-gradient(to right,#3030c8 0 4px,transparent 4px 6px);opacity:0.55"></div>
<div class="a" style="left:928px;top:667px;width:3px;height:2px;background:#2020b0;border-radius:1px;opacity:0.8"></div>
<div class="a" style="left:956px;top:667px;width:30px;height:1px;background:repeating-linear-gradient(to right,#6060d0 0 3px,transparent 3px 6px);opacity:0.45"></div>
<div class="a" style="left:811px;top:225px;width:368px;height:22px;background:#fff"></div>
<svg class="a" style="left:813px;top:229px;" width="13" height="13" viewBox="0 0 13 13"><defs><radialGradient id="ay" cx="0.4" cy="0.35" r="0.7"><stop offset="0" stop-color="#ffe98a"/><stop offset="1" stop-color="#e3a400"/></radialGradient><radialGradient id="ar" cx="0.5" cy="0.35" r="0.7"><stop offset="0" stop-color="#f27a7a"/><stop offset="1" stop-color="#b01414"/></radialGradient><linearGradient id="ab" x1="0" y1="0" x2="0" y2="1"><stop offset="0" stop-color="#8ec0ff"/><stop offset="1" stop-color="#2b6fdc"/></linearGradient></defs><rect x="0.5" y="0.5" width="12" height="12" fill="#f6f6f6" stroke="#cfcfcf"/><rect x="1.2" y="4" width="3.6" height="5.3" rx="0.5" fill="url(#ar)"/><rect x="5.2" y="0.9" width="6.6" height="6.6" rx="0.6" fill="url(#ay)" stroke="#c89410" stroke-width="0.5"/><rect x="5.2" y="7.9" width="5" height="3.8" rx="0.5" fill="url(#ab)"/></svg>
<div class="t" style="left:830.8px;top:226px;font-size:11px;letter-spacing:-0.50px;color:#000;transform:scaleX(0.977);transform-origin:0 0;">Language Rule Edit</div>
<svg class="a" style="left:1160px;top:231px;" width="9" height="9" viewBox="0 0 9 9"><path d="M0.6 0.6 L8.4 8.4 M8.4 0.6 L0.6 8.4" stroke="#111" stroke-width="1.1"/></svg>
<div class="a" style="left:822px;top:264px;width:348px;height:179px;border:1px solid #dcdcdc;border-radius:1px"></div>
<div class="a" style="left:826px;top:263px;width:71.3px;height:3px;background:#f0f0f0"></div>
<div class="t k" style="left:828.0px;top:254px;font-size:10.5px;letter-spacing:-0.50px;transform:scaleX(0.927);transform-origin:0 0;">General Settings</div>
<div class="t k" style="left:828.5px;top:274px;font-size:10.5px;letter-spacing:-0.50px;transform:scaleX(0.930);transform-origin:0 0;">Type</div>
<div class="t k" style="left:828.5px;top:298px;font-size:10.5px;letter-spacing:-0.50px;transform:scaleX(0.951);transform-origin:0 0;">Chunk Type</div>
<div class="t k" style="left:828.5px;top:322px;font-size:10.5px;letter-spacing:-0.50px;transform:scaleX(0.889);transform-origin:0 0;">Group</div>
<div class="t k" style="left:828.5px;top:345px;font-size:10.5px;letter-spacing:-0.50px;transform:scaleX(0.931);transform-origin:0 0;">Description</div>
<div class="t k" style="left:828.5px;top:390px;font-size:10.5px;letter-spacing:-0.50px;transform:scaleX(0.828);transform-origin:0 0;">Regex</div>
<div class="t k" style="left:828.5px;top:411px;font-size:10.5px;letter-spacing:-0.50px;transform:scaleX(0.913);transform-origin:0 0;">Regex Opts</div>
<div class="a" style="left:894px;top:275px;width:127px;height:18px;background:#fff;border:1px solid #7a7a7a"></div>
<div class="t k" style="left:897.0px;top:274px;font-size:10.5px;letter-spacing:-0.50px;transform:scaleX(0.916);transform-origin:0 0;">MarkRule</div>
<svg class="a" style="left:1008px;top:282px;" width="9" height="6" viewBox="0 0 9 6"><path d="M0.8 1 L4.5 4.8 L8.2 1" fill="none" stroke="#333" stroke-width="1.1"/></svg>
<div class="a" style="left:894px;top:299px;width:127px;height:18px;background:#fff;border:1px solid #7a7a7a"></div>
<div class="t k" style="left:897.0px;top:298px;font-size:10.5px;letter-spacing:-0.50px;transform:scaleX(0.930);transform-origin:0 0;">SGMLTag</div>
<svg class="a" style="left:1008px;top:306px;" width="9" height="6" viewBox="0 0 9 6"><path d="M0.8 1 L4.5 4.8 L8.2 1" fill="none" stroke="#333" stroke-width="1.1"/></svg>
<div class="a" style="left:894px;top:323px;width:127px;height:18px;background:#fff;border:1px solid #7a7a7a"></div>
<div class="t k" style="left:897.0px;top:322px;font-size:10.5px;letter-spacing:-0.50px;transform:scaleX(0.903);transform-origin:0 0;">EmbededString</div>
<svg class="a" style="left:1008px;top:330px;" width="9" height="6" viewBox="0 0 9 6"><path d="M0.8 1 L4.5 4.8 L8.2 1" fill="none" stroke="#333" stroke-width="1.1"/></svg>
<svg class="a" style="left:1084px;top:278px;" width="12" height="12" viewBox="0 0 12 12"><rect x="0.5" y="0.5" width="11" height="11" fill="#f0f0f0" stroke="#c8c8c8"/></svg>
<div class="t k" style="left:1100.5px;top:274px;font-size:10.5px;letter-spacing:-0.50px;color:#a0a0a0;transform:scaleX(0.927);transform-origin:0 0;">ExceptionRule</div>
<div class="a" style="left:894px;top:347px;width:271px;height:39px;background:#fff;border:1px solid #8a8a8a"></div>
<div class="a" style="left:1150px;top:349px;width:14px;height:36px;background:#f0f0f0"></div>
<svg class="a" style="left:1153px;top:354px;" width="8" height="5" viewBox="0 0 8 5"><path d="M0.8 4.2 L4.0 0.9 L7.2 4.2" fill="none" stroke="#b5b5b5" stroke-width="1.6"/></svg>
<svg class="a" style="left:1153px;top:374px;" width="8" height="5" viewBox="0 0 8 5"><path d="M0.8 0.8 L4.0 4.1 L7.2 0.8" fill="none" stroke="#b5b5b5" stroke-width="1.6"/></svg>
<div class="t k" style="left:897.0px;top:345px;font-size:10.5px;letter-spacing:-0.50px;transform:scaleX(0.937);transform-origin:0 0;">Mark style tags as Internal Code</div>
<div class="a" style="left:894px;top:391px;width:271px;height:18px;background:#fff;border:1px solid #8a8a8a"></div>
<div class="mono" style="left:896px;top:392px;color:#2a2a2a;letter-spacing:0.32px;-webkit-text-stroke:0.15px #2a2a2a">^(?&lt;m&gt;.*)$</div>
<svg class="a" style="left:894px;top:415px;" width="12" height="12" viewBox="0 0 12 12"><rect x="0.5" y="0.5" width="11" height="11" fill="#fff" stroke="#333"/><path d="M2.2 6 L4.6 8.5 L9.6 3" fill="none" stroke="#333" stroke-width="1.2"/></svg>
<div class="t k" style="left:910.0px;top:411px;font-size:10.5px;letter-spacing:-0.50px;transform:scaleX(0.917);transform-origin:0 0;">IgnoreCase</div>
<svg class="a" style="left:967px;top:415px;" width="12" height="12" viewBox="0 0 12 12"><rect x="0.5" y="0.5" width="11" height="11" fill="#fff" stroke="#333"/><path d="M2.2 6 L4.6 8.5 L9.6 3" fill="none" stroke="#333" stroke-width="1.2"/></svg>
<div class="t k" style="left:982.7px;top:411px;font-size:10.5px;letter-spacing:-0.50px;transform:scaleX(0.937);transform-origin:0 0;">SingleLine</div>
<svg class="a" style="left:1035px;top:415px;" width="12" height="12" viewBox="0 0 12 12"><rect x="0.5" y="0.5" width="11" height="11" fill="#fff" stroke="#333"/></svg>
<div class="t k" style="left:1051.4px;top:411px;font-size:10.5px;letter-spacing:-0.50px;transform:scaleX(0.926);transform-origin:0 0;">MultiLine</div>
<div class="a" style="left:822px;top:456px;width:348px;height:83px;border:1px solid #dcdcdc;border-radius:1px"></div>
<div class="a" style="left:826.6px;top:455px;width:53px;height:3px;background:#f0f0f0"></div>
<div class="t k" style="left:828.6px;top:446px;font-size:10.5px;letter-spacing:-0.50px;transform:scaleX(0.850);transform-origin:0 0;">SGML Filters</div>
<div class="t k" style="left:829.6px;top:465px;font-size:10.5px;letter-spacing:-0.50px;transform:scaleX(0.951);transform-origin:0 0;">SGML Chunk Type</div>
<div class="a" style="left:925px;top:467px;width:109px;height:18px;background:#fff;border:1px solid #7a7a7a"></div>
<div class="t k" style="left:928.0px;top:466px;font-size:10.5px;letter-spacing:-0.50px;transform:scaleX(0.936);transform-origin:0 0;">None</div>
<svg class="a" style="left:1021px;top:474px;" width="9" height="6" viewBox="0 0 9 6"><path d="M0.8 1 L4.5 4.8 L8.2 1" fill="none" stroke="#333" stroke-width="1.1"/></svg>
<div class="t k" style="left:829.6px;top:489px;font-size:10.5px;letter-spacing:-0.50px;transform:scaleX(0.938);transform-origin:0 0;">Chunk Name</div>
<div class="a" style="left:925px;top:491px;width:109px;height:17px;background:#fff;border:1px solid #8a8a8a"></div>
<div class="t k" style="left:928.0px;top:490px;font-size:10.5px;letter-spacing:-0.50px;transform:scaleX(0.933);transform-origin:0 0;">^style$</div>
<div class="t k" style="left:829.6px;top:513px;font-size:10.5px;letter-spacing:-0.50px;transform:scaleX(0.981);transform-origin:0 0;">Parent Tag</div>
<div class="a" style="left:925px;top:514px;width:109px;height:17px;background:#fff;border:1px solid #8a8a8a"></div>
<div class="a" style="left:822px;top:551px;width:348px;height:82px;border:1px solid #dcdcdc;border-radius:1px"></div>
<div class="a" style="left:826.6px;top:550px;width:34px;height:3px;background:#f0f0f0"></div>
<div class="t k" style="left:828.6px;top:541px;font-size:10.5px;letter-spacing:-0.50px;transform:scaleX(0.906);transform-origin:0 0;">Actions</div>
<div class="t k" style="left:828.6px;top:561px;font-size:10.5px;letter-spacing:-0.50px;transform:scaleX(0.931);transform-origin:0 0;">Mark As</div>
<div class="a" style="left:925px;top:563px;width:109px;height:18px;background:#fff;border:1px solid #7a7a7a"></div>
<div class="t k" style="left:928.0px;top:562px;font-size:10.5px;letter-spacing:-0.50px;transform:scaleX(0.965);transform-origin:0 0;">Internal Code</div>
<svg class="a" style="left:1021px;top:570px;" width="9" height="6" viewBox="0 0 9 6"><path d="M0.8 1 L4.5 4.8 L8.2 1" fill="none" stroke="#333" stroke-width="1.1"/></svg>
<div class="t k" style="left:828.6px;top:585px;font-size:10.5px;letter-spacing:-0.50px;transform:scaleX(0.967);transform-origin:0 0;">Detected Chunk Type</div>
<div class="a" style="left:925px;top:587px;width:109px;height:18px;background:#fff;border:1px solid #d0d0d0"></div>
<div class="a" style="left:927px;top:589px;width:91px;height:14px;background:#f0f0f0"></div>
<div class="t k" style="left:928.0px;top:586px;font-size:10.5px;letter-spacing:-0.50px;color:#8d8d8d;transform:scaleX(0.936);transform-origin:0 0;">None</div>
<svg class="a" style="left:1021px;top:594px;" width="9" height="6" viewBox="0 0 9 6"><path d="M0.8 1 L4.5 4.8 L8.2 1" fill="none" stroke="#b0b0b0" stroke-width="1.1"/></svg>
<div class="t k" style="left:828.6px;top:609px;font-size:10.5px;letter-spacing:-0.50px;transform:scaleX(0.952);transform-origin:0 0;">Detected Language</div>
<div class="a" style="left:925px;top:611px;width:109px;height:18px;background:#fff;border:1px solid #d0d0d0"></div>
<div class="a" style="left:927px;top:613px;width:91px;height:14px;background:#f0f0f0"></div>
<svg class="a" style="left:1021px;top:618px;" width="9" height="6" viewBox="0 0 9 6"><path d="M0.8 1 L4.5 4.8 L8.2 1" fill="none" stroke="#b0b0b0" stroke-width="1.1"/></svg>
<div class="a" style="left:1115px;top:641px;width:54px;height:18px;background:#e1e1e1;border:2px solid #0078d7"></div>
<div class="t k" style="left:1131.0px;top:641px;font-size:10.5px;letter-spacing:-0.50px;transform:scaleX(0.907);transform-origin:0 0;">Save</div>
</body></html>
